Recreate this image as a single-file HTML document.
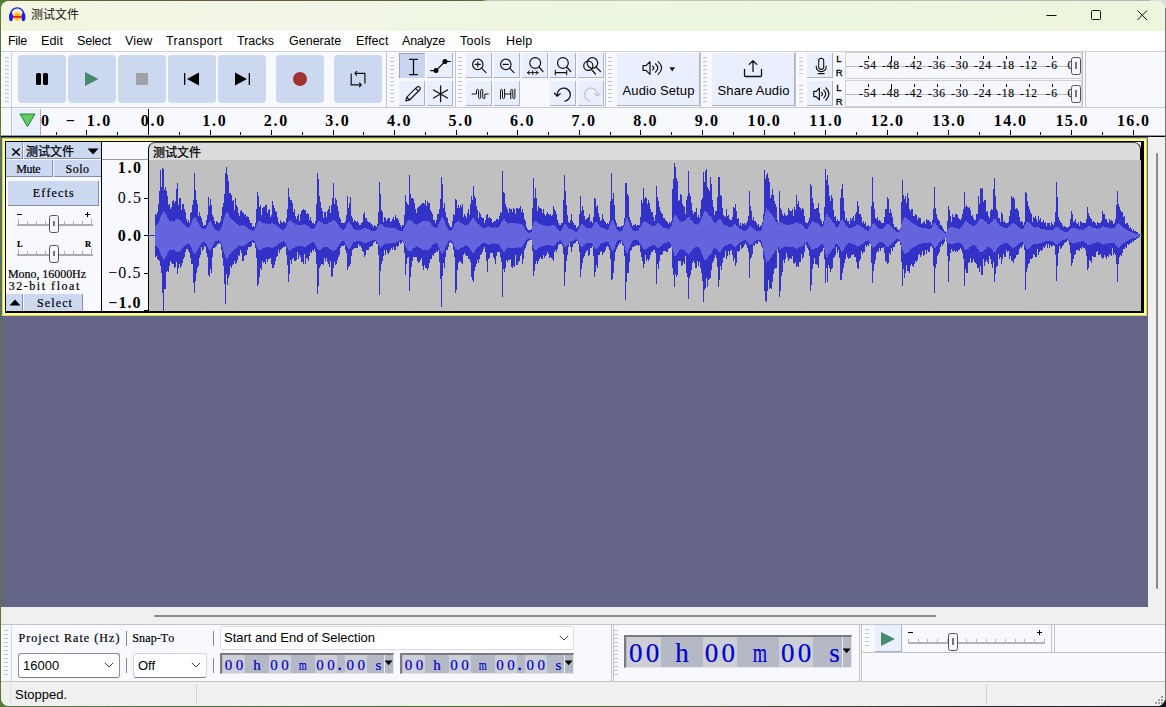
<!DOCTYPE html>
<html lang="zh"><head><meta charset="utf-8"><title>测试文件</title>
<style>
*{box-sizing:border-box;margin:0;padding:0}
html,body{width:1166px;height:707px;overflow:hidden;background:#4a6a30}
body{background:linear-gradient(90deg,#567a36 0%,#4a6a30 35%,#56583c 60%,#22242c 85%,#14161e 100%)}
body{position:relative;font-family:"Liberation Sans","Noto Sans CJK SC",sans-serif;font-size:13px;color:#000}
.abs{position:absolute}
.t{white-space:nowrap}
#win{position:absolute;left:1px;top:1px;width:1164px;height:705px;border-radius:8px;overflow:hidden;background:#f0f0f0}
#in{position:absolute;left:-1px;top:-1px;width:1166px;height:707px}
.sim{font-family:"Liberation Serif","Noto Serif CJK SC",serif;-webkit-text-stroke-width:0.2px}
.rl{font-family:"Liberation Serif","Noto Serif CJK SC",serif;font-size:16px;line-height:16px;font-weight:bold}
.tb{position:absolute;background:#ccd7f0;border-radius:4px}
.grab{position:absolute;width:4px;background:repeating-linear-gradient(to bottom,#c4c4c4 0,#c4c4c4 1px,transparent 1px,transparent 4px)}
</style></head><body>
<div class="abs" style="left:6px;top:0;width:1160px;height:1px;background:linear-gradient(90deg,#5a6a3a 0,#6a5a40 20%,#5a6a3a 41%,#c4c8bc 41.5%,#b4b8b0 100%)"></div><div class="abs" style="left:1150px;top:0;width:16px;height:12px;background:#dcdcdc"></div><div class="abs" style="left:1165px;top:8px;width:1px;height:692px;background:#70747c"></div>
<div id="win"><div id="in">
<div class="abs" style="left:0px;top:0px;width:1166px;height:31px;background:linear-gradient(90deg,#f1f5df 0%,#f3f6e5 15%,#f2f6e8 28%,#edf6df 46%,#edf6dd 100%);"></div>
<svg class="abs" style="left:8px;top:6px" width="18" height="16" viewBox="0 0 18 16">
<defs><radialGradient id="ig" cx="50%" cy="50%" r="55%"><stop offset="0" stop-color="#ff9a10"/><stop offset="0.6" stop-color="#ffc020"/><stop offset="1" stop-color="#fff08a"/></radialGradient></defs>
<ellipse cx="9.2" cy="10.4" rx="4.3" ry="4.6" fill="url(#ig)"/>
<rect x="5" y="10" width="8.4" height="1.7" fill="#f01818"/>
<path d="M2.7 10.5V8.4A6.5 6.5 0 0 1 15.7 8.4V10.5" fill="none" stroke="#1c1cff" stroke-width="1.4"/>
<ellipse cx="3" cy="11" rx="2" ry="4.2" fill="#1c1cff"/><ellipse cx="15.4" cy="11" rx="2" ry="4.2" fill="#1c1cff"/>
</svg>
<div class="abs t " style="left:31px;top:7px;font-size:12px;line-height:16px;color:#111">测试文件</div>
<svg class="abs" style="left:1040px;top:8px" width="120" height="16" viewBox="0 0 120 16" fill="none" stroke="#111" stroke-width="1">
<path d="M6.5 7.5H16.5"/><rect x="51.5" y="2.5" width="9" height="9" rx="1"/><path d="M97.5 2.5L107 12M107 2.5L97.5 12"/></svg>
<div class="abs" style="left:0px;top:31px;width:1166px;height:20px;background:#ffffff;"></div>
<div class="abs t " style="left:8px;top:33px;font-size:12.5px;line-height:16px;letter-spacing:-0.3px">File</div>
<div class="abs t " style="left:41px;top:33px;font-size:12.5px;line-height:16px;letter-spacing:0.15px">Edit</div>
<div class="abs t " style="left:77px;top:33px;font-size:12.5px;line-height:16px;letter-spacing:-0.15px">Select</div>
<div class="abs t " style="left:125px;top:33px;font-size:12.5px;line-height:16px;letter-spacing:0.15px">View</div>
<div class="abs t " style="left:166px;top:33px;font-size:12.5px;line-height:16px;letter-spacing:0.38px">Transport</div>
<div class="abs t " style="left:237px;top:33px;font-size:12.5px;line-height:16px;letter-spacing:0px">Tracks</div>
<div class="abs t " style="left:289px;top:33px;font-size:12.5px;line-height:16px;letter-spacing:0px">Generate</div>
<div class="abs t " style="left:356px;top:33px;font-size:12.5px;line-height:16px;letter-spacing:0.15px">Effect</div>
<div class="abs t " style="left:402px;top:33px;font-size:12.5px;line-height:16px;letter-spacing:-0.2px">Analyze</div>
<div class="abs t " style="left:460px;top:33px;font-size:12.5px;line-height:16px;letter-spacing:0.3px">Tools</div>
<div class="abs t " style="left:506px;top:33px;font-size:12.5px;line-height:16px;letter-spacing:0.18px">Help</div>
<div class="abs" style="left:0px;top:51px;width:1166px;height:57px;background:#f8f9fe;border-top:1px solid #d0d0d0"></div>
<div class="grab" style="left:5px;top:57px;height:46px"></div>
<div class="abs" style="left:11px;top:52px;width:1px;height:55px;background:#d4d4d8;"></div>
<div class="tb" style="left:18px;top:55px;width:48px;height:48px"></div>
<div class="tb" style="left:68px;top:55px;width:48px;height:48px"></div>
<div class="tb" style="left:118px;top:55px;width:48px;height:48px"></div>
<div class="tb" style="left:168px;top:55px;width:48px;height:48px"></div>
<div class="tb" style="left:218px;top:55px;width:48px;height:48px"></div>
<div class="tb" style="left:276px;top:55px;width:48px;height:48px"></div>
<div class="tb" style="left:334px;top:55px;width:48px;height:48px"></div>
<div class="abs" style="left:36px;top:72.6px;width:5.2px;height:12.2px;background:#000;border-radius:1.5px"></div>
<div class="abs" style="left:42.8px;top:72.6px;width:5.2px;height:12.2px;background:#000;border-radius:1.5px"></div>
<svg class="abs" style="left:84px;top:71px" width="16" height="16" viewBox="0 0 16 16"><path d="M1 1L14.5 8L1 15z" fill="#468c6c"/></svg>
<div class="abs" style="left:136px;top:73px;width:12px;height:12px;background:#a0a0a8;"></div>
<svg class="abs" style="left:184px;top:72px" width="16" height="14" viewBox="0 0 16 14"><rect x="0" y="1" width="1.3" height="12" fill="#000"/><path d="M15 0.5V13.5L3 7z" fill="#000"/></svg>
<svg class="abs" style="left:234px;top:72px" width="16" height="14" viewBox="0 0 16 14"><rect x="14.7" y="1" width="1.3" height="12" fill="#000"/><path d="M1 0.5V13.5L13 7z" fill="#000"/></svg>
<div class="abs" style="left:293px;top:72px;width:14px;height:14px;background:#a03232;border-radius:7px"></div>
<svg class="abs" style="left:350px;top:70px" width="16" height="18" viewBox="0 0 16 18" fill="none" stroke="#111" stroke-width="1.2"><path d="M1.2 3.4V14.8H11.2M11.4 14.8L9.2 12.6M11.4 14.8L9.2 17"/><path d="M14.9 13.6V3.4H5M4.8 3.4L7 1.2M4.8 3.4L7 5.6"/></svg>
<div class="abs" style="left:386px;top:52px;width:1px;height:55px;background:#c4c4c8;"></div>
<div class="grab" style="left:390px;top:57px;height:46px"></div>
<div class="abs" style="left:399px;top:53px;width:26px;height:25px;background:#c9d5ef;border-top:1px solid #98a4c0;border-left:1px solid #98a4c0"></div>
<div class="abs" style="left:427px;top:53px;width:26px;height:25px;background:#e9effc;border-bottom:1px solid #a8b2cc;border-right:1px solid #a8b2cc"></div>
<div class="abs" style="left:399px;top:81px;width:26px;height:25px;background:#e9effc;border-bottom:1px solid #a8b2cc;border-right:1px solid #a8b2cc"></div>
<div class="abs" style="left:427px;top:81px;width:26px;height:25px;background:#e9effc;border-bottom:1px solid #a8b2cc;border-right:1px solid #a8b2cc"></div>
<svg class="abs" style="left:399px;top:52px" width="26" height="26" viewBox="0 0 26 26" fill="none" stroke="#111" stroke-width="1.2" stroke-linecap="round" ><path d="M10.6 7.4H18.4M10.6 22.6H18.4M14.5 7.4V22.6" stroke-width="1.3"/></svg>
<svg class="abs" style="left:427px;top:52px" width="27" height="26" viewBox="0 0 27 26" fill="none" stroke="#111" stroke-width="1.2" stroke-linecap="round" ><path d="M3.5 18.6H9M9 18.6L18 9.5M18 9.5H23.5" stroke-width="1.2"/><circle cx="9" cy="18.6" r="2.5" fill="#000" stroke="none"/><circle cx="18" cy="9.5" r="2.5" fill="#000" stroke="none"/></svg>
<svg class="abs" style="left:399px;top:81px" width="26" height="26" viewBox="0 0 26 26" fill="none" stroke="#111" stroke-width="1.2" stroke-linecap="round" ><path d="M6.8 19.9L7.8 16.2L17.8 6.2A1.9 1.9 0 0 1 20.6 9L10.6 19L6.8 19.9zM7.8 16.2L10.6 19M16.6 7.4L19.4 10.2" stroke-width="1.1" stroke-linejoin="round"/></svg>
<svg class="abs" style="left:427px;top:81px" width="27" height="26" viewBox="0 0 27 26" fill="none" stroke="#111" stroke-width="1.2" stroke-linecap="round" ><path d="M13.6 5V20.7M6.5 9L20.5 17M20.5 9L6.5 17" stroke-width="1.3"/></svg>
<div class="abs" style="left:455px;top:52px;width:1px;height:55px;background:#c4c4c8;"></div>
<div class="grab" style="left:458px;top:57px;height:46px"></div>
<div class="abs" style="left:466px;top:53px;width:26px;height:25px;background:#e9effc;border-bottom:1px solid #a8b2cc;border-right:1px solid #a8b2cc"></div>
<div class="abs" style="left:494px;top:53px;width:26px;height:25px;background:#e9effc;border-bottom:1px solid #a8b2cc;border-right:1px solid #a8b2cc"></div>
<div class="abs" style="left:522px;top:53px;width:26px;height:25px;background:#e9effc;border-bottom:1px solid #a8b2cc;border-right:1px solid #a8b2cc"></div>
<div class="abs" style="left:550px;top:53px;width:26px;height:25px;background:#e9effc;border-bottom:1px solid #a8b2cc;border-right:1px solid #a8b2cc"></div>
<div class="abs" style="left:578px;top:53px;width:26px;height:25px;background:#e9effc;border-bottom:1px solid #a8b2cc;border-right:1px solid #a8b2cc"></div>
<div class="abs" style="left:466px;top:81px;width:26px;height:25px;background:#e9effc;border-bottom:1px solid #a8b2cc;border-right:1px solid #a8b2cc"></div>
<div class="abs" style="left:494px;top:81px;width:26px;height:25px;background:#e9effc;border-bottom:1px solid #a8b2cc;border-right:1px solid #a8b2cc"></div>
<div class="abs" style="left:550px;top:81px;width:26px;height:25px;background:#e9effc;border-bottom:1px solid #a8b2cc;border-right:1px solid #a8b2cc"></div>
<div class="abs" style="left:578px;top:81px;width:26px;height:25px;background:#e9effc;border-bottom:1px solid #a8b2cc;border-right:1px solid #a8b2cc"></div>
<svg class="abs" style="left:466px;top:52px" width="26" height="26" viewBox="0 0 26 26" fill="none" stroke="#111" stroke-width="1.2" stroke-linecap="round" ><circle cx="11.8" cy="12.4" r="5.2"/><path d="M15.6 16.2L20 20.6"/><path d="M9.3 12.4H14.3M11.8 9.9V14.9" stroke-width="1.1"/></svg>
<svg class="abs" style="left:494px;top:52px" width="26" height="26" viewBox="0 0 26 26" fill="none" stroke="#111" stroke-width="1.2" stroke-linecap="round" ><circle cx="11.8" cy="12.4" r="5.2"/><path d="M15.6 16.2L20 20.6"/><path d="M9.3 12.4H14.3" stroke-width="1.1"/></svg>
<svg class="abs" style="left:522px;top:52px" width="26" height="26" viewBox="0 0 26 26" fill="none" stroke="#111" stroke-width="1.2" stroke-linecap="round" ><circle cx="13.2" cy="11" r="5.4"/><path d="M17 15L21 19.5"/><path d="M5.5 20.6H16M5.5 20.6L7.5 18.8M5.5 20.6L7.5 22.4M16 20.6L14 18.8M16 20.6L14 22.4M10.7 18.8V22.4" stroke-width="1"/></svg>
<svg class="abs" style="left:550px;top:52px" width="26" height="26" viewBox="0 0 26 26" fill="none" stroke="#111" stroke-width="1.2" stroke-linecap="round" ><circle cx="12.9" cy="11" r="5.4"/><path d="M16.7 15L20.7 19.5"/><path d="M5.3 20.6H16.7M5.3 18.4V22.8M16.7 18.4V22.8" stroke-width="1.1"/></svg>
<svg class="abs" style="left:578px;top:52px" width="26" height="26" viewBox="0 0 26 26" fill="none" stroke="#111" stroke-width="1.2" stroke-linecap="round" ><circle cx="10.3" cy="13.8" r="4.6"/><circle cx="14.4" cy="11" r="5.3"/><path d="M18 15L22.5 19.5M13.5 17.5L17.5 22"/></svg>
<svg class="abs" style="left:466px;top:81px" width="26" height="26" viewBox="0 0 26 26" fill="none" stroke="#111" stroke-width="1.2" stroke-linecap="round" ><path d="M6 13H10.5V9.6Q10.5 8.4 11.55 8.4Q12.6 8.4 12.6 9.6V16.4Q12.6 17.6 13.65 17.6Q14.7 17.6 14.7 16.4V9.6Q14.7 8.4 15.75 8.4Q16.8 8.4 16.8 9.6V16.4Q16.8 17.6 17.85 17.6Q18.9 17.6 18.9 16.4V13H22.2" stroke-width="1" stroke-linejoin="round"/></svg>
<svg class="abs" style="left:494px;top:81px" width="26" height="26" viewBox="0 0 26 26" fill="none" stroke="#111" stroke-width="1.2" stroke-linecap="round" ><path d="M6.5 17.8V9.6Q6.5 8.4 7.5 8.4Q8.5 8.4 8.5 9.6V16.4Q8.5 17.6 9.55 17.6Q10.6 17.6 10.6 16.4V8.2M10.6 13H16.8M16.8 17.8V9.6Q16.8 8.4 17.8 8.4Q18.8 8.4 18.8 9.6V16.4Q18.8 17.6 19.85 17.6Q20.9 17.6 20.9 16.4V8.2" stroke-width="1" stroke-linejoin="round"/></svg>
<svg class="abs" style="left:550px;top:81px" width="26" height="26" viewBox="0 0 26 26" fill="none" stroke="#111" stroke-width="1.2" stroke-linecap="round" ><path d="M7.2 14.6A6.6 6.6 0 1 1 15 20.2" stroke-width="1.3"/><path d="M4.6 12.2L7.2 15.2L10.2 12.8" stroke-width="1.3"/></svg>
<svg class="abs" style="left:578px;top:81px" width="26" height="26" viewBox="0 0 26 26" fill="none" stroke="#c4c8d4" stroke-width="1.2" stroke-linecap="round" style="stroke:#c4c8d4"><path d="M19.6 14.6A6.6 6.6 0 1 0 11.8 20.2" stroke-width="1.3"/><path d="M22.2 12.2L19.6 15.2L16.6 12.8" stroke-width="1.3"/></svg>
<div class="abs" style="left:605px;top:52px;width:1px;height:55px;background:#c4c4c8;"></div>
<div class="grab" style="left:608px;top:57px;height:46px"></div>
<div class="abs" style="left:617px;top:53px;width:83px;height:53px;background:#e9effc;border-bottom:1px solid #a8b2cc;border-right:1px solid #a8b2cc"></div>
<svg class="abs" style="left:642px;top:60px" width="22" height="16" viewBox="0 0 22 16" fill="none" stroke="#111" stroke-width="1.2" stroke-linecap="round" ><path d="M1 5.6H4L8 1.6V14.4L4 10.4H1z" stroke-linejoin="round"/><path d="M10.6 6.2Q13.2 8 10.6 9.8M13.4 3.8Q18.2 8 13.4 12.2M16.2 1.6Q23 8 16.2 14.4"/></svg>
<svg class="abs" style="left:669px;top:67px" width="7" height="5" viewBox="0 0 7 5"><path d="M0.4 0.3H6L3.2 4.4z" fill="#111"/></svg>
<div class="abs t " style="left:617px;top:83px;width:83px;text-align:center;font-size:13px;line-height:16px;letter-spacing:0.1px">Audio Setup</div>
<div class="abs" style="left:700px;top:52px;width:1px;height:55px;background:#c4c4c8;"></div>
<div class="grab" style="left:703px;top:57px;height:46px"></div>
<div class="abs" style="left:712px;top:53px;width:83px;height:53px;background:#e9effc;border-bottom:1px solid #a8b2cc;border-right:1px solid #a8b2cc"></div>
<svg class="abs" style="left:743px;top:59px" width="20" height="19" viewBox="0 0 20 19" fill="none" stroke="#111" stroke-width="1.2" stroke-linecap="round" ><path d="M1.5 10.5V16.5Q1.5 17.5 2.5 17.5H17.5Q18.5 17.5 18.5 16.5V10.5M10 12.5V1.6M10 1.6L6.2 5.4M10 1.6L13.8 5.4" stroke-width="1.3"/></svg>
<div class="abs t " style="left:712px;top:83px;width:83px;text-align:center;font-size:13px;line-height:16px;letter-spacing:0.1px">Share Audio</div>
<div class="abs" style="left:795px;top:52px;width:1px;height:55px;background:#c4c4c8;"></div>
<div class="grab" style="left:799px;top:57px;height:19px"></div>
<div class="abs" style="left:807px;top:53px;width:26px;height:25px;background:#e9effc;border-bottom:1px solid #a8b2cc;border-right:1px solid #a8b2cc"></div>
<div class="abs t " style="left:836.3px;top:54px;font-size:9.5px;line-height:10px;-webkit-text-stroke-width:0.3px">L</div>
<div class="abs t " style="left:835.8px;top:68px;font-size:9.5px;line-height:10px;-webkit-text-stroke-width:0.3px">R</div>
<div class="abs" style="left:845px;top:52px;width:237px;height:27px;background:#f7f8fd;border:1px solid #d0d0d4"></div>
<div class="abs" style="left:846px;top:66px;width:230px;height:1px;background:#b8b8bc;"></div>
<div class="abs" style="left:868px;top:56px;width:1px;height:3px;background:#000;"></div>
<div class="abs t sim" style="left:858.95px;top:59px;font-kerning:none;letter-spacing:0.89px;font-size:11.5px;line-height:13px;-webkit-text-stroke-width:0.15px">-54</div>
<div class="abs" style="left:891px;top:56px;width:1px;height:6px;background:#000;"></div>
<div class="abs t sim" style="left:881.95px;top:59px;font-kerning:none;letter-spacing:0.89px;font-size:11.5px;line-height:13px;-webkit-text-stroke-width:0.15px">-48</div>
<div class="abs" style="left:914px;top:56px;width:1px;height:3px;background:#000;"></div>
<div class="abs t sim" style="left:904.95px;top:59px;font-kerning:none;letter-spacing:0.89px;font-size:11.5px;line-height:13px;-webkit-text-stroke-width:0.15px">-42</div>
<div class="abs" style="left:937px;top:56px;width:1px;height:3px;background:#000;"></div>
<div class="abs t sim" style="left:927.95px;top:59px;font-kerning:none;letter-spacing:0.89px;font-size:11.5px;line-height:13px;-webkit-text-stroke-width:0.15px">-36</div>
<div class="abs" style="left:960px;top:56px;width:1px;height:3px;background:#000;"></div>
<div class="abs t sim" style="left:950.95px;top:59px;font-kerning:none;letter-spacing:0.89px;font-size:11.5px;line-height:13px;-webkit-text-stroke-width:0.15px">-30</div>
<div class="abs" style="left:983px;top:56px;width:1px;height:3px;background:#000;"></div>
<div class="abs t sim" style="left:973.95px;top:59px;font-kerning:none;letter-spacing:0.89px;font-size:11.5px;line-height:13px;-webkit-text-stroke-width:0.15px">-24</div>
<div class="abs" style="left:1006px;top:56px;width:1px;height:3px;background:#000;"></div>
<div class="abs t sim" style="left:996.95px;top:59px;font-kerning:none;letter-spacing:0.89px;font-size:11.5px;line-height:13px;-webkit-text-stroke-width:0.15px">-18</div>
<div class="abs" style="left:1029px;top:56px;width:1px;height:3px;background:#000;"></div>
<div class="abs t sim" style="left:1019.95px;top:59px;font-kerning:none;letter-spacing:0.89px;font-size:11.5px;line-height:13px;-webkit-text-stroke-width:0.15px">-12</div>
<div class="abs" style="left:1052px;top:56px;width:1px;height:3px;background:#000;"></div>
<div class="abs t sim" style="left:1046.11px;top:59px;font-kerning:none;letter-spacing:1.21px;font-size:11.5px;line-height:13px;-webkit-text-stroke-width:0.15px">-6</div>
<div class="abs t sim" style="left:1067.5px;top:59px;font-size:11.5px;line-height:13px">0</div>
<div class="abs" style="left:1071px;top:57px;width:10px;height:18px;background:#f4f6fc;border:1px solid #555;border-radius:2.5px"></div>
<div class="abs" style="left:1075px;top:62px;width:2px;height:7px;background:#777;"></div>
<div class="grab" style="left:799px;top:85px;height:19px"></div>
<div class="abs" style="left:807px;top:81px;width:26px;height:25px;background:#e9effc;border-bottom:1px solid #a8b2cc;border-right:1px solid #a8b2cc"></div>
<div class="abs t " style="left:836.3px;top:83px;font-size:9.5px;line-height:10px;-webkit-text-stroke-width:0.3px">L</div>
<div class="abs t " style="left:835.8px;top:97px;font-size:9.5px;line-height:10px;-webkit-text-stroke-width:0.3px">R</div>
<div class="abs" style="left:845px;top:80px;width:237px;height:27px;background:#f7f8fd;border:1px solid #d0d0d4"></div>
<div class="abs" style="left:846px;top:94px;width:230px;height:1px;background:#b8b8bc;"></div>
<div class="abs" style="left:868px;top:84px;width:1px;height:3px;background:#000;"></div>
<div class="abs t sim" style="left:858.95px;top:87px;font-kerning:none;letter-spacing:0.89px;font-size:11.5px;line-height:13px;-webkit-text-stroke-width:0.15px">-54</div>
<div class="abs" style="left:891px;top:84px;width:1px;height:6px;background:#000;"></div>
<div class="abs t sim" style="left:881.95px;top:87px;font-kerning:none;letter-spacing:0.89px;font-size:11.5px;line-height:13px;-webkit-text-stroke-width:0.15px">-48</div>
<div class="abs" style="left:914px;top:84px;width:1px;height:3px;background:#000;"></div>
<div class="abs t sim" style="left:904.95px;top:87px;font-kerning:none;letter-spacing:0.89px;font-size:11.5px;line-height:13px;-webkit-text-stroke-width:0.15px">-42</div>
<div class="abs" style="left:937px;top:84px;width:1px;height:3px;background:#000;"></div>
<div class="abs t sim" style="left:927.95px;top:87px;font-kerning:none;letter-spacing:0.89px;font-size:11.5px;line-height:13px;-webkit-text-stroke-width:0.15px">-36</div>
<div class="abs" style="left:960px;top:84px;width:1px;height:3px;background:#000;"></div>
<div class="abs t sim" style="left:950.95px;top:87px;font-kerning:none;letter-spacing:0.89px;font-size:11.5px;line-height:13px;-webkit-text-stroke-width:0.15px">-30</div>
<div class="abs" style="left:983px;top:84px;width:1px;height:3px;background:#000;"></div>
<div class="abs t sim" style="left:973.95px;top:87px;font-kerning:none;letter-spacing:0.89px;font-size:11.5px;line-height:13px;-webkit-text-stroke-width:0.15px">-24</div>
<div class="abs" style="left:1006px;top:84px;width:1px;height:3px;background:#000;"></div>
<div class="abs t sim" style="left:996.95px;top:87px;font-kerning:none;letter-spacing:0.89px;font-size:11.5px;line-height:13px;-webkit-text-stroke-width:0.15px">-18</div>
<div class="abs" style="left:1029px;top:84px;width:1px;height:3px;background:#000;"></div>
<div class="abs t sim" style="left:1019.95px;top:87px;font-kerning:none;letter-spacing:0.89px;font-size:11.5px;line-height:13px;-webkit-text-stroke-width:0.15px">-12</div>
<div class="abs" style="left:1052px;top:84px;width:1px;height:3px;background:#000;"></div>
<div class="abs t sim" style="left:1046.11px;top:87px;font-kerning:none;letter-spacing:1.21px;font-size:11.5px;line-height:13px;-webkit-text-stroke-width:0.15px">-6</div>
<div class="abs t sim" style="left:1067.5px;top:87px;font-size:11.5px;line-height:13px">0</div>
<div class="abs" style="left:1071px;top:85px;width:10px;height:18px;background:#f4f6fc;border:1px solid #555;border-radius:2.5px"></div>
<div class="abs" style="left:1075px;top:90px;width:2px;height:7px;background:#777;"></div>
<svg class="abs" style="left:807px;top:52px" width="26" height="26" viewBox="0 0 26 26" fill="none" stroke="#111" stroke-width="1.2" stroke-linecap="round" ><rect x="11.7" y="6.2" width="5" height="11.2" rx="2.5" stroke-width="1.1"/><path d="M9.2 14Q9.2 19.6 14.2 19.6Q19.2 19.6 19.2 14M11.2 21.6H17.2" stroke-width="1.1"/></svg>
<svg class="abs" style="left:812.5px;top:87px" width="18" height="14" viewBox="0 0 18 14" fill="none" stroke="#111" stroke-width="1.2" stroke-linecap="round" ><path d="M0.8 4.4H3.2L6.4 1.2V12.8L3.2 9.6H0.8z" stroke-linejoin="round"/><path d="M8.6 5.4Q10.4 7 8.6 8.6M10.8 3.2Q14.6 7 10.8 10.8M13 1Q18.8 7 13 13"/></svg>
<div class="abs" style="left:1082px;top:52px;width:1px;height:55px;background:#c4c4c8;"></div>
<div class="abs" style="left:1085px;top:52px;width:1px;height:55px;background:#c4c4c8;"></div>
<div class="abs" style="left:0px;top:107px;width:1166px;height:1px;background:#c8c8c8;"></div>
<div class="abs" style="left:0px;top:108px;width:1166px;height:27px;background:#f8f9fe;"></div>
<div class="abs" style="left:11px;top:108px;width:1px;height:27px;background:#c0c0c4;"></div>
<div class="abs" style="left:13px;top:109px;width:27px;height:26px;background:#eaf0fc;"></div>
<div class="abs" style="left:40px;top:109px;width:1px;height:26px;background:#a8b0c8;"></div>
<svg class="abs" style="left:19px;top:113px" width="17" height="15" viewBox="0 0 17 15"><path d="M1 1H16L8.5 13.6z" fill="#5ccf5c" stroke="#2c7a3c" stroke-width="1"/></svg>
<div class="abs" style="left:56px;top:132px;width:1px;height:3px;background:#000;"></div>
<div class="abs" style="left:86px;top:130px;width:1px;height:5px;background:#000;"></div>
<div class="abs" style="left:117px;top:132px;width:1px;height:3px;background:#000;"></div>
<div class="abs" style="left:148px;top:130px;width:1px;height:5px;background:#000;"></div>
<div class="abs" style="left:179px;top:132px;width:1px;height:3px;background:#000;"></div>
<div class="abs" style="left:210px;top:130px;width:1px;height:5px;background:#000;"></div>
<div class="abs" style="left:240px;top:132px;width:1px;height:3px;background:#000;"></div>
<div class="abs" style="left:271px;top:130px;width:1px;height:5px;background:#000;"></div>
<div class="abs" style="left:302px;top:132px;width:1px;height:3px;background:#000;"></div>
<div class="abs" style="left:333px;top:130px;width:1px;height:5px;background:#000;"></div>
<div class="abs" style="left:363px;top:132px;width:1px;height:3px;background:#000;"></div>
<div class="abs" style="left:394px;top:130px;width:1px;height:5px;background:#000;"></div>
<div class="abs" style="left:425px;top:132px;width:1px;height:3px;background:#000;"></div>
<div class="abs" style="left:456px;top:130px;width:1px;height:5px;background:#000;"></div>
<div class="abs" style="left:487px;top:132px;width:1px;height:3px;background:#000;"></div>
<div class="abs" style="left:517px;top:130px;width:1px;height:5px;background:#000;"></div>
<div class="abs" style="left:548px;top:132px;width:1px;height:3px;background:#000;"></div>
<div class="abs" style="left:579px;top:130px;width:1px;height:5px;background:#000;"></div>
<div class="abs" style="left:610px;top:132px;width:1px;height:3px;background:#000;"></div>
<div class="abs" style="left:640px;top:130px;width:1px;height:5px;background:#000;"></div>
<div class="abs" style="left:671px;top:132px;width:1px;height:3px;background:#000;"></div>
<div class="abs" style="left:702px;top:130px;width:1px;height:5px;background:#000;"></div>
<div class="abs" style="left:733px;top:132px;width:1px;height:3px;background:#000;"></div>
<div class="abs" style="left:764px;top:130px;width:1px;height:5px;background:#000;"></div>
<div class="abs" style="left:794px;top:132px;width:1px;height:3px;background:#000;"></div>
<div class="abs" style="left:825px;top:130px;width:1px;height:5px;background:#000;"></div>
<div class="abs" style="left:856px;top:132px;width:1px;height:3px;background:#000;"></div>
<div class="abs" style="left:887px;top:130px;width:1px;height:5px;background:#000;"></div>
<div class="abs" style="left:917px;top:132px;width:1px;height:3px;background:#000;"></div>
<div class="abs" style="left:948px;top:130px;width:1px;height:5px;background:#000;"></div>
<div class="abs" style="left:979px;top:132px;width:1px;height:3px;background:#000;"></div>
<div class="abs" style="left:1010px;top:130px;width:1px;height:5px;background:#000;"></div>
<div class="abs" style="left:1040px;top:132px;width:1px;height:3px;background:#000;"></div>
<div class="abs" style="left:1071px;top:130px;width:1px;height:5px;background:#000;"></div>
<div class="abs" style="left:1102px;top:132px;width:1px;height:3px;background:#000;"></div>
<div class="abs" style="left:1133px;top:130px;width:1px;height:5px;background:#000;"></div>
<div class="abs t rl" style="left:40.94px;top:113px;font-kerning:none;letter-spacing:0.4px;">0</div>
<div class="abs t rl" style="left:65.79px;top:113px;font-kerning:none;letter-spacing:-0.717px;">−</div>
<div class="abs t rl" style="left:86.77px;top:113px;font-kerning:none;letter-spacing:1.733px;">1.0</div>
<div class="abs t rl" style="left:140.77px;top:113px;font-kerning:none;letter-spacing:1.733px;">0.0</div>
<div class="abs t rl" style="left:202.27px;top:113px;font-kerning:none;letter-spacing:1.733px;">1.0</div>
<div class="abs t rl" style="left:263.87px;top:113px;font-kerning:none;letter-spacing:1.733px;">2.0</div>
<div class="abs t rl" style="left:325.37px;top:113px;font-kerning:none;letter-spacing:1.733px;">3.0</div>
<div class="abs t rl" style="left:386.97px;top:113px;font-kerning:none;letter-spacing:1.733px;">4.0</div>
<div class="abs t rl" style="left:448.57px;top:113px;font-kerning:none;letter-spacing:1.733px;">5.0</div>
<div class="abs t rl" style="left:510.07px;top:113px;font-kerning:none;letter-spacing:1.733px;">6.0</div>
<div class="abs t rl" style="left:571.57px;top:113px;font-kerning:none;letter-spacing:1.733px;">7.0</div>
<div class="abs t rl" style="left:633.17px;top:113px;font-kerning:none;letter-spacing:1.733px;">8.0</div>
<div class="abs t rl" style="left:694.67px;top:113px;font-kerning:none;letter-spacing:1.733px;">9.0</div>
<div class="abs t rl" style="left:747.59px;top:113px;font-kerning:none;letter-spacing:1.4px;">10.0</div>
<div class="abs t rl" style="left:809.19px;top:113px;font-kerning:none;letter-spacing:1.4px;">11.0</div>
<div class="abs t rl" style="left:870.69px;top:113px;font-kerning:none;letter-spacing:1.4px;">12.0</div>
<div class="abs t rl" style="left:932.19px;top:113px;font-kerning:none;letter-spacing:1.4px;">13.0</div>
<div class="abs t rl" style="left:993.79px;top:113px;font-kerning:none;letter-spacing:1.4px;">14.0</div>
<div class="abs t rl" style="left:1055.39px;top:113px;font-kerning:none;letter-spacing:1.4px;">15.0</div>
<div class="abs t rl" style="left:1116.89px;top:113px;font-kerning:none;letter-spacing:1.4px;">16.0</div>
<div class="abs" style="left:148px;top:109px;width:1px;height:27px;background:#000;"></div>
<div class="abs" style="left:0px;top:135px;width:1166px;height:1px;background:#9a9aa0;"></div>
<div class="abs" style="left:0px;top:136px;width:1166px;height:1px;background:#000;"></div>
<div class="abs" style="left:0px;top:137px;width:1148px;height:470px;background:#646586;"></div>
<div class="abs" style="left:2px;top:138px;width:1145px;height:178px;background:#ffff80;border:1px solid #d2d284"></div>
<div class="abs" style="left:5px;top:141px;width:1139px;height:172px;background:#000;"></div>
<div class="abs" style="left:6px;top:142px;width:95px;height:169px;background:#f8f9fe;"></div>
<div class="abs" style="left:6px;top:142px;width:17px;height:17px;background:#ccd7f0;border-right:1px solid #8890a8;border-bottom:1px solid #8890a8"></div>
<svg class="abs" style="left:10.5px;top:146.5px" width="10" height="10" viewBox="0 0 10 10"><path d="M1.3 1.5L8.7 8.5M8.7 1.5L1.3 8.5" stroke="#000" stroke-width="1.6"/></svg>
<div class="abs" style="left:24px;top:142px;width:77px;height:17px;background:#ccd7f0;border-bottom:1px solid #8890a8"></div>
<div class="abs t " style="left:26px;top:145px;font-size:12px;line-height:14px;color:#000;-webkit-text-stroke:0.25px #000;font-family:"Liberation Sans","Noto Sans CJK SC",sans-serif;letter-spacing:0.3px">测试文件</div>
<svg class="abs" style="left:87px;top:148px" width="12" height="7" viewBox="0 0 12 7"><path d="M0.5 0.5H11.5L6 6.5z" fill="#000"/></svg>
<div class="abs" style="left:6px;top:160px;width:47px;height:17px;background:#ccd7f0;border-right:1px solid #8890a8;border-bottom:1px solid #8890a8"></div>
<div class="abs" style="left:54px;top:160px;width:47px;height:17px;background:#ccd7f0;border-bottom:1px solid #8890a8"></div>
<div class="abs t sim" style="left:16.13px;top:162px;font-kerning:none;letter-spacing:-0.332px;font-size:12px;line-height:14px">Mute</div>
<div class="abs t sim" style="left:65.55px;top:162px;font-kerning:none;letter-spacing:0.498px;font-size:12px;line-height:14px">Solo</div>
<div class="abs" style="left:8px;top:181px;width:91px;height:25px;background:#ccd7f0;border-right:1px solid #8890a8;border-bottom:1px solid #8890a8"></div>
<div class="abs t sim" style="left:32.77px;top:186px;font-kerning:none;letter-spacing:1.146px;font-size:12px;line-height:14px">Effects</div>
<div class="abs" style="left:17px;top:224px;width:76px;height:2px;background:#acacac;"></div>
<div class="abs" style="left:18px;top:219px;width:1px;height:5px;background:#b0b0b0;"></div>
<div class="abs" style="left:27px;top:221px;width:1px;height:3px;background:#b0b0b0;"></div>
<div class="abs" style="left:36px;top:221px;width:1px;height:3px;background:#b0b0b0;"></div>
<div class="abs" style="left:45px;top:221px;width:1px;height:3px;background:#b0b0b0;"></div>
<div class="abs" style="left:55px;top:221px;width:1px;height:3px;background:#b0b0b0;"></div>
<div class="abs" style="left:64px;top:221px;width:1px;height:3px;background:#b0b0b0;"></div>
<div class="abs" style="left:73px;top:221px;width:1px;height:3px;background:#b0b0b0;"></div>
<div class="abs" style="left:82px;top:221px;width:1px;height:3px;background:#b0b0b0;"></div>
<div class="abs" style="left:91px;top:219px;width:1px;height:5px;background:#b0b0b0;"></div>
<div class="abs" style="left:49px;top:215px;width:10px;height:18px;background:#f4f6fc;border:1px solid #555;border-radius:2.5px"></div>
<div class="abs" style="left:53.2px;top:220.5px;width:1.6px;height:5.5px;background:#777;"></div>
<div class="abs" style="left:17px;top:214px;width:5px;height:1.4px;background:#000;"></div>
<div class="abs" style="left:85px;top:214px;width:5px;height:1.4px;background:#000;"></div>
<div class="abs" style="left:86.8px;top:212.2px;width:1.4px;height:5px;background:#000;"></div>
<div class="abs" style="left:17px;top:254px;width:76px;height:2px;background:#acacac;"></div>
<div class="abs" style="left:18px;top:249px;width:1px;height:5px;background:#b0b0b0;"></div>
<div class="abs" style="left:27px;top:251px;width:1px;height:3px;background:#b0b0b0;"></div>
<div class="abs" style="left:36px;top:251px;width:1px;height:3px;background:#b0b0b0;"></div>
<div class="abs" style="left:45px;top:251px;width:1px;height:3px;background:#b0b0b0;"></div>
<div class="abs" style="left:55px;top:251px;width:1px;height:3px;background:#b0b0b0;"></div>
<div class="abs" style="left:64px;top:251px;width:1px;height:3px;background:#b0b0b0;"></div>
<div class="abs" style="left:73px;top:251px;width:1px;height:3px;background:#b0b0b0;"></div>
<div class="abs" style="left:82px;top:251px;width:1px;height:3px;background:#b0b0b0;"></div>
<div class="abs" style="left:91px;top:249px;width:1px;height:5px;background:#b0b0b0;"></div>
<div class="abs" style="left:49px;top:245px;width:10px;height:18px;background:#f4f6fc;border:1px solid #555;border-radius:2.5px"></div>
<div class="abs" style="left:53.2px;top:250.5px;width:1.6px;height:5.5px;background:#777;"></div>
<div class="abs t sim" style="left:17px;top:238.5px;font-size:8.5px;line-height:10px;font-weight:bold">L</div>
<div class="abs t sim" style="left:85px;top:238.5px;font-size:8.5px;line-height:10px;font-weight:bold">R</div>
<div class="abs t sim" style="left:7.97px;top:268px;font-kerning:none;letter-spacing:-0.051px;font-size:12px;line-height:12px">Mono, 16000Hz</div>
<div class="abs t sim" style="left:8.76px;top:280px;font-kerning:none;letter-spacing:1.529px;font-size:12px;line-height:12px">32-bit float</div>
<div class="abs" style="left:6px;top:294px;width:17px;height:17px;background:#ccd7f0;border-right:1px solid #8890a8"></div>
<svg class="abs" style="left:9px;top:299px" width="12" height="7" viewBox="0 0 12 7"><path d="M0.5 6.5H11.5L6 0.5z" fill="#000"/></svg>
<div class="abs" style="left:24px;top:294px;width:59px;height:17px;background:#ccd7f0;border-right:1px solid #8890a8"></div>
<div class="abs t sim" style="left:37.06px;top:296px;font-kerning:none;letter-spacing:1.113px;font-size:12px;line-height:14px">Select</div>
<div class="abs" style="left:102px;top:142px;width:46px;height:169px;background:#f8f9fe;"></div>
<div class="abs" style="left:102px;top:159px;width:46px;height:1px;background:#9a9aa0;"></div>
<div class="abs t rl" style="left:117.67px;top:160px;font-kerning:none;letter-spacing:1.733px;">1.0</div>
<div class="abs t rl" style="left:117.67px;top:190px;font-kerning:none;letter-spacing:1.733px;font-weight:normal;">0.5</div>
<div class="abs t rl" style="left:117.67px;top:228px;font-kerning:none;letter-spacing:1.733px;">0.0</div>
<div class="abs t rl" style="left:108.17px;top:265px;font-kerning:none;letter-spacing:1.144px;font-weight:normal;">−0.5</div>
<div class="abs t rl" style="left:108.15px;top:295px;font-kerning:none;letter-spacing:1.121px;">−1.0</div>
<div class="abs" style="left:144px;top:198px;width:4px;height:1px;background:#000;"></div>
<div class="abs" style="left:144px;top:235px;width:4px;height:1px;background:#000;"></div>
<div class="abs" style="left:144px;top:273px;width:4px;height:1px;background:#000;"></div>
<div class="abs" style="left:144px;top:310px;width:4px;height:1px;background:#000;"></div>
<div class="abs" style="left:149px;top:142px;width:992px;height:169px;background:#c0c0c0;"></div>
<div class="abs" style="left:148px;top:142px;width:6px;height:6px;background:#f8f9fe;"></div>
<div class="abs" style="left:1136px;top:142px;width:5px;height:5px;background:#f8f9fe;"></div>
<div class="abs" style="left:148px;top:142px;width:993px;height:24px;background:#dcdcdc;border-radius:7px 7px 0 0;border:1px solid #000;border-top-color:#505050;border-bottom:none"></div>
<div class="abs" style="left:149px;top:160px;width:992px;height:8px;background:#c0c0c0;"></div>
<div class="abs" style="left:148px;top:160px;width:1px;height:151px;background:#000;"></div>
<div class="abs t " style="left:153px;top:146px;font-size:12px;line-height:15px;color:#000;-webkit-text-stroke:0.25px #000;font-family:"Liberation Sans","Noto Sans CJK SC",sans-serif">测试文件</div>
<svg class="abs" style="left:0;top:0" width="1166" height="707" viewBox="0 0 1166 707" shape-rendering="crispEdges">
<rect x="149" y="235" width="7" height="1" fill="#3232c8"/>
<polygon fill="#3232c8" points="155,213.8 156,213.8 156,214.8 157,214.8 157,211.6 158,211.6 158,203.8 159,203.8 159,191.2 160,191.2 160,169.7 161,169.7 161,187.2 162,187.2 162,168.0 163,168.0 163,168.6 164,168.6 164,190.2 165,190.2 165,186.7 166,186.7 166,191.1 167,191.1 167,195.5 168,195.5 168,204.7 169,204.7 169,203.8 170,203.8 170,208.6 171,208.6 171,206.7 172,206.7 172,200.9 173,200.9 173,200.2 174,200.2 174,202.7 175,202.7 175,201.0 176,201.0 176,189.0 177,189.0 177,183.3 178,183.3 178,204.5 179,204.5 179,198.4 180,198.4 180,198.0 181,198.0 181,210.2 182,210.2 182,203.8 183,203.8 183,204.0 184,204.0 184,209.2 185,209.2 185,212.2 186,212.2 186,218.6 187,218.6 187,222.4 188,222.4 188,220.4 189,220.4 189,222.6 190,222.6 190,213.1 191,213.1 191,211.5 192,211.5 192,205.2 193,205.2 193,199.5 194,199.5 194,173.1 195,173.1 195,189.9 196,189.9 196,199.6 197,199.6 197,204.2 198,204.2 198,216.0 199,216.0 199,211.7 200,211.7 200,216.1 201,216.1 201,217.6 202,217.6 202,222.0 203,222.0 203,225.7 204,225.7 204,224.6 205,224.6 205,224.5 206,224.5 206,220.4 207,220.4 207,215.2 208,215.2 208,196.9 209,196.9 209,205.6 210,205.6 210,199.4 211,199.4 211,204.8 212,204.8 212,215.1 213,215.1 213,216.7 214,216.7 214,220.6 215,220.6 215,223.5 216,223.5 216,220.5 217,220.5 217,222.3 218,222.3 218,223.0 219,223.0 219,222.9 220,222.9 220,221.2 221,221.2 221,216.2 222,216.2 222,207.1 223,207.1 223,203.4 224,203.4 224,193.7 225,193.7 225,173.1 226,173.1 226,167.1 227,167.1 227,175.3 228,175.3 228,181.3 229,181.3 229,192.7 230,192.7 230,193.3 231,193.3 231,194.6 232,194.6 232,200.8 233,200.8 233,199.8 234,199.8 234,209.6 235,209.6 235,198.0 236,198.0 236,205.2 237,205.2 237,206.8 238,206.8 238,212.6 239,212.6 239,215.8 240,215.8 240,211.3 241,211.3 241,210.4 242,210.4 242,211.6 243,211.6 243,213.1 244,213.1 244,214.8 245,214.8 245,213.8 246,213.8 246,216.6 247,216.6 247,215.7 248,215.7 248,217.0 249,217.0 249,219.6 250,219.6 250,222.5 251,222.5 251,222.9 252,222.9 252,227.4 253,227.4 253,225.8 254,225.8 254,227.2 255,227.2 255,223.0 256,223.0 256,209.3 257,209.3 257,192.4 258,192.4 258,195.5 259,195.5 259,207.4 260,207.4 260,204.8 261,204.8 261,214.6 262,214.6 262,207.8 263,207.8 263,206.5 264,206.5 264,206.9 265,206.9 265,204.6 266,204.6 266,204.7 267,204.7 267,212.5 268,212.5 268,209.9 269,209.9 269,209.3 270,209.3 270,217.1 271,217.1 271,214.8 272,214.8 272,201.4 273,201.4 273,205.3 274,205.3 274,208.1 275,208.1 275,211.4 276,211.4 276,211.6 277,211.6 277,217.4 278,217.4 278,222.2 279,222.2 279,223.8 280,223.8 280,220.3 281,220.3 281,222.1 282,222.1 282,223.4 283,223.4 283,220.6 284,220.6 284,222.4 285,222.4 285,222.7 286,222.7 286,217.9 287,217.9 287,209.2 288,209.2 288,187.8 289,187.8 289,196.9 290,196.9 290,199.9 291,199.9 291,200.3 292,200.3 292,202.8 293,202.8 293,212.3 294,212.3 294,209.3 295,209.3 295,215.7 296,215.7 296,219.4 297,219.4 297,215.8 298,215.8 298,213.6 299,213.6 299,220.7 300,220.7 300,213.5 301,213.5 301,211.0 302,211.0 302,210.0 303,210.0 303,209.3 304,209.3 304,210.1 305,210.1 305,209.5 306,209.5 306,214.0 307,214.0 307,212.5 308,212.5 308,213.9 309,213.9 309,220.0 310,220.0 310,217.3 311,217.3 311,221.0 312,221.0 312,222.9 313,222.9 313,223.1 314,223.1 314,223.6 315,223.6 315,220.5 316,220.5 316,203.9 317,203.9 317,173.1 318,173.1 318,178.5 319,178.5 319,195.6 320,195.6 320,201.6 321,201.6 321,208.3 322,208.3 322,211.4 323,211.4 323,218.2 324,218.2 324,211.5 325,211.5 325,211.6 326,211.6 326,216.8 327,216.8 327,210.8 328,210.8 328,209.3 329,209.3 329,205.7 330,205.7 330,213.4 331,213.4 331,204.8 332,204.8 332,197.8 333,197.8 333,183.3 334,183.3 334,204.4 335,204.4 335,198.1 336,198.1 336,200.3 337,200.3 337,205.8 338,205.8 338,210.8 339,210.8 339,216.5 340,216.5 340,219.0 341,219.0 341,223.3 342,223.3 342,222.9 343,222.9 343,223.1 344,223.1 344,222.7 345,222.7 345,220.6 346,220.6 346,215.4 347,215.4 347,195.7 348,195.7 348,207.8 349,207.8 349,203.3 350,203.3 350,196.9 351,196.9 351,216.4 352,216.4 352,218.4 353,218.4 353,221.7 354,221.7 354,219.8 355,219.8 355,220.6 356,220.6 356,222.3 357,222.3 357,221.2 358,221.2 358,222.8 359,222.8 359,225.4 360,225.4 360,225.1 361,225.1 361,223.3 362,223.3 362,221.8 363,221.8 363,214.1 364,214.1 364,211.6 365,211.6 365,217.9 366,217.9 366,218.1 367,218.1 367,220.6 368,220.6 368,222.0 369,222.0 369,222.1 370,222.1 370,222.7 371,222.7 371,224.0 372,224.0 372,225.2 373,225.2 373,226.6 374,226.6 374,225.2 375,225.2 375,226.0 376,226.0 376,226.5 377,226.5 377,224.4 378,224.4 378,212.4 379,212.4 379,182.2 380,182.2 380,193.7 381,193.7 381,209.5 382,209.5 382,212.2 383,212.2 383,221.5 384,221.5 384,216.9 385,216.9 385,218.4 386,218.4 386,220.6 387,220.6 387,219.2 388,219.2 388,217.8 389,217.8 389,218.4 390,218.4 390,222.1 391,222.1 391,221.2 392,221.2 392,218.5 393,218.5 393,216.5 394,216.5 394,220.0 395,220.0 395,215.0 396,215.0 396,218.3 397,218.3 397,218.3 398,218.3 398,220.4 399,220.4 399,222.6 400,222.6 400,225.0 401,225.0 401,226.6 402,226.6 402,225.0 403,225.0 403,224.7 404,224.7 404,215.0 405,215.0 405,194.6 406,194.6 406,202.1 407,202.1 407,204.0 408,204.0 408,204.8 409,204.8 409,175.4 410,175.4 410,194.1 411,194.1 411,197.7 412,197.7 412,198.0 413,198.0 413,198.7 414,198.7 414,203.4 415,203.4 415,208.9 416,208.9 416,213.0 417,213.0 417,207.5 418,207.5 418,207.2 419,207.2 419,205.9 420,205.9 420,204.8 421,204.8 421,203.6 422,203.6 422,202.5 423,202.5 423,202.9 424,202.9 424,204.4 425,204.4 425,200.3 426,200.3 426,206.3 427,206.3 427,201.2 428,201.2 428,202.5 429,202.5 429,203.2 430,203.2 430,209.8 431,209.8 431,211.5 432,211.5 432,213.8 433,213.8 433,220.0 434,220.0 434,219.9 435,219.9 435,222.5 436,222.5 436,220.0 437,220.0 437,214.4 438,214.4 438,213.7 439,213.7 439,208.6 440,208.6 440,198.7 441,198.7 441,176.5 442,176.5 442,184.4 443,184.4 443,208.1 444,208.1 444,202.5 445,202.5 445,212.0 446,212.0 446,216.6 447,216.6 447,218.4 448,218.4 448,222.6 449,222.6 449,224.5 450,224.5 450,227.0 451,227.0 451,227.3 452,227.3 452,221.0 453,221.0 453,213.9 454,213.9 454,214.9 455,214.9 455,199.1 456,199.1 456,199.9 457,199.9 457,207.5 458,207.5 458,204.6 459,204.6 459,208.3 460,208.3 460,205.4 461,205.4 461,206.6 462,206.6 462,203.7 463,203.7 463,217.2 464,217.2 464,214.4 465,214.4 465,216.1 466,216.1 466,218.1 467,218.1 467,212.5 468,212.5 468,209.3 469,209.3 469,214.8 470,214.8 470,204.0 471,204.0 471,195.7 472,195.7 472,200.1 473,200.1 473,185.6 474,185.6 474,196.1 475,196.1 475,198.4 476,198.4 476,205.9 477,205.9 477,210.3 478,210.3 478,217.7 479,217.7 479,211.6 480,211.6 480,213.9 481,213.9 481,216.7 482,216.7 482,218.4 483,218.4 483,217.5 484,217.5 484,223.1 485,223.1 485,220.2 486,220.2 486,215.2 487,215.2 487,213.9 488,213.9 488,218.1 489,218.1 489,216.9 490,216.9 490,218.3 491,218.3 491,219.1 492,219.1 492,223.0 493,223.0 493,221.9 494,221.9 494,221.4 495,221.4 495,220.6 496,220.6 496,218.6 497,218.6 497,219.2 498,219.2 498,219.5 499,219.5 499,215.8 500,215.8 500,211.6 501,211.6 501,212.5 502,212.5 502,170.8 503,170.8 503,192.4 504,192.4 504,192.7 505,192.7 505,203.7 506,203.7 506,207.4 507,207.4 507,209.0 508,209.0 508,212.9 509,212.9 509,207.6 510,207.6 510,209.3 511,209.3 511,209.0 512,209.0 512,212.2 513,212.2 513,208.2 514,208.2 514,209.2 515,209.2 515,214.4 516,214.4 516,208.2 517,208.2 517,208.3 518,208.3 518,209.3 519,209.3 519,207.5 520,207.5 520,206.2 521,206.2 521,211.9 522,211.9 522,209.3 523,209.3 523,213.1 524,213.1 524,219.3 525,219.3 525,220.6 526,220.6 526,226.7 527,226.7 527,228.9 528,228.9 528,229.7 529,229.7 529,229.6 530,229.6 530,229.5 531,229.5 531,229.4 532,229.4 532,208.4 533,208.4 533,177.6 534,177.6 534,197.7 535,197.7 535,187.8 536,187.8 536,197.8 537,197.8 537,211.1 538,211.1 538,205.9 539,205.9 539,207.6 540,207.6 540,207.5 541,207.5 541,209.3 542,209.3 542,213.1 543,213.1 543,208.7 544,208.7 544,214.1 545,214.1 545,215.5 546,215.5 546,213.9 547,213.9 547,211.5 548,211.5 548,214.4 549,214.4 549,214.6 550,214.6 550,213.9 551,213.9 551,215.8 552,215.8 552,215.1 553,215.1 553,205.9 554,205.9 554,208.6 555,208.6 555,211.0 556,211.0 556,213.9 557,213.9 557,220.3 558,220.3 558,222.6 559,222.6 559,224.8 560,224.8 560,225.4 561,225.4 561,222.8 562,222.8 562,222.7 563,222.7 563,200.3 564,200.3 564,175.4 565,175.4 565,191.2 566,191.2 566,204.8 567,204.8 567,215.0 568,215.0 568,221.7 569,221.7 569,222.7 570,222.7 570,220.2 571,220.2 571,213.9 572,213.9 572,221.4 573,221.4 573,223.3 574,223.3 574,225.2 575,225.2 575,225.1 576,225.1 576,228.1 577,228.1 577,227.3 578,227.3 578,226.3 579,226.3 579,213.6 580,213.6 580,195.7 581,195.7 581,211.2 582,211.2 582,206.2 583,206.2 583,209.7 584,209.7 584,215.8 585,215.8 585,220.1 586,220.1 586,219.2 587,219.2 587,217.8 588,217.8 588,217.2 589,217.2 589,213.9 590,213.9 590,221.6 591,221.6 591,221.3 592,221.3 592,222.9 593,222.9 593,217.3 594,217.3 594,198.0 595,198.0 595,198.8 596,198.8 596,206.5 597,206.5 597,204.8 598,204.8 598,212.8 599,212.8 599,217.3 600,217.3 600,220.6 601,220.6 601,220.4 602,220.4 602,213.9 603,213.9 603,218.5 604,218.5 604,220.9 605,220.9 605,221.9 606,221.9 606,223.8 607,223.8 607,222.9 608,222.9 608,223.5 609,223.5 609,220.6 610,220.6 610,200.6 611,200.6 611,173.1 612,173.1 612,199.2 613,199.2 613,193.2 614,193.2 614,204.5 615,204.5 615,220.2 616,220.2 616,222.7 617,222.7 617,226.8 618,226.8 618,226.3 619,226.3 619,227.3 620,227.3 620,226.7 621,226.7 621,226.3 622,226.3 622,226.4 623,226.4 623,225.2 624,225.2 624,217.9 625,217.9 625,183.3 626,183.3 626,183.2 627,183.2 627,194.2 628,194.2 628,195.7 629,195.7 629,217.4 630,217.4 630,220.1 631,220.1 631,222.9 632,222.9 632,226.1 633,226.1 633,224.5 634,224.5 634,225.2 635,225.2 635,224.0 636,224.0 636,225.7 637,225.7 637,225.3 638,225.3 638,225.2 639,225.2 639,224.7 640,224.7 640,216.9 641,216.9 641,199.9 642,199.9 642,202.9 643,202.9 643,187.8 644,187.8 644,198.7 645,198.7 645,197.4 646,197.4 646,198.0 647,198.0 647,204.3 648,204.3 648,200.4 649,200.4 649,202.5 650,202.5 650,209.4 651,209.4 651,211.8 652,211.8 652,211.6 653,211.6 653,216.7 654,216.7 654,220.7 655,220.7 655,215.1 656,215.1 656,185.6 657,185.6 657,196.6 658,196.6 658,200.7 659,200.7 659,207.1 660,207.1 660,210.7 661,210.7 661,213.4 662,213.4 662,213.9 663,213.9 663,217.8 664,217.8 664,217.9 665,217.9 665,220.2 666,220.2 666,220.6 667,220.6 667,221.7 668,221.7 668,224.1 669,224.1 669,222.0 670,222.0 670,222.8 671,222.8 671,220.5 672,220.5 672,189.0 673,189.0 673,178.7 674,178.7 674,162.9 675,162.9 675,167.4 676,167.4 676,177.6 677,177.6 677,180.9 678,180.9 678,200.5 679,200.5 679,200.3 680,200.3 680,194.4 681,194.4 681,194.6 682,194.6 682,203.6 683,203.6 683,205.5 684,205.5 684,207.1 685,207.1 685,214.0 686,214.0 686,200.3 687,200.3 687,195.6 688,195.6 688,170.8 689,170.8 689,192.6 690,192.6 690,196.1 691,196.1 691,202.7 692,202.7 692,211.1 693,211.1 693,213.9 694,213.9 694,212.0 695,212.0 695,211.5 696,211.5 696,208.2 697,208.2 697,216.5 698,216.5 698,214.5 699,214.5 699,217.7 700,217.7 700,208.7 701,208.7 701,200.2 702,200.2 702,198.3 703,198.3 703,172.0 704,172.0 704,182.1 705,182.1 705,170.8 706,170.8 706,169.2 707,169.2 707,187.2 708,187.2 708,188.6 709,188.6 709,191.0 710,191.0 710,176.5 711,176.5 711,184.1 712,184.1 712,199.5 713,199.5 713,207.1 714,207.1 714,215.4 715,215.4 715,211.3 716,211.3 716,210.6 717,210.6 717,197.1 718,197.1 718,176.5 719,176.5 719,177.0 720,177.0 720,194.5 721,194.5 721,195.7 722,195.7 722,208.2 723,208.2 723,214.7 724,214.7 724,215.9 725,215.9 725,217.1 726,217.1 726,209.3 727,209.3 727,215.6 728,215.6 728,214.8 729,214.8 729,218.9 730,218.9 730,220.1 731,220.1 731,220.2 732,220.2 732,216.9 733,216.9 733,207.1 734,207.1 734,207.8 735,207.8 735,203.7 736,203.7 736,211.2 737,211.2 737,219.2 738,219.2 738,218.4 739,218.4 739,224.6 740,224.6 740,223.2 741,223.2 741,225.6 742,225.6 742,222.9 743,222.9 743,224.1 744,224.1 744,223.4 745,223.4 745,225.2 746,225.2 746,222.9 747,222.9 747,220.6 748,220.6 748,215.7 749,215.7 749,191.2 750,191.2 750,205.7 751,205.7 751,211.4 752,211.4 752,219.8 753,219.8 753,217.3 754,217.3 754,220.5 755,220.5 755,220.5 756,220.5 756,223.3 757,223.3 757,224.8 758,224.8 758,224.3 759,224.3 759,227.4 760,227.4 760,226.4 761,226.4 761,225.1 762,225.1 762,222.1 763,222.1 763,213.8 764,213.8 764,169.7 765,169.7 765,178.5 766,178.5 766,175.4 767,175.4 767,172.8 768,172.8 768,177.7 769,177.7 769,182.2 770,182.2 770,197.9 771,197.9 771,195.1 772,195.1 772,188.7 773,188.7 773,194.6 774,194.6 774,200.5 775,200.5 775,203.8 776,203.8 776,207.1 777,207.1 777,220.4 778,220.4 778,222.7 779,222.7 779,191.2 780,191.2 780,208.2 781,208.2 781,210.2 782,210.2 782,214.1 783,214.1 783,215.7 784,215.7 784,212.6 785,212.6 785,214.9 786,214.9 786,216.4 787,216.4 787,214.7 788,214.7 788,208.2 789,208.2 789,209.5 790,209.5 790,211.1 791,211.1 791,211.3 792,211.3 792,209.4 793,209.4 793,215.6 794,215.6 794,206.6 795,206.6 795,209.8 796,209.8 796,194.6 797,194.6 797,203.7 798,203.7 798,201.0 799,201.0 799,207.3 800,207.3 800,208.0 801,208.0 801,209.5 802,209.5 802,207.8 803,207.8 803,209.3 804,209.3 804,216.2 805,216.2 805,222.4 806,222.4 806,222.9 807,222.9 807,223.0 808,223.0 808,220.6 809,220.6 809,217.8 810,217.8 810,184.4 811,184.4 811,186.4 812,186.4 812,197.9 813,197.9 813,202.5 814,202.5 814,208.7 815,208.7 815,209.0 816,209.0 816,208.1 817,208.1 817,208.4 818,208.4 818,202.5 819,202.5 819,212.9 820,212.9 820,219.4 821,219.4 821,220.6 822,220.6 822,224.0 823,224.0 823,220.6 824,220.6 824,207.0 825,207.0 825,168.6 826,168.6 826,179.6 827,179.6 827,175.4 828,175.4 828,185.0 829,185.0 829,195.7 830,195.7 830,201.4 831,201.4 831,195.3 832,195.3 832,198.0 833,198.0 833,210.4 834,210.4 834,217.1 835,217.1 835,216.1 836,216.1 836,221.4 837,221.4 837,219.1 838,219.1 838,220.6 839,220.6 839,220.9 840,220.9 840,197.9 841,197.9 841,189.4 842,189.4 842,184.4 843,184.4 843,197.8 844,197.8 844,211.0 845,211.0 845,220.3 846,220.3 846,217.9 847,217.9 847,220.5 848,220.5 848,220.5 849,220.5 849,223.6 850,223.6 850,217.8 851,217.8 851,220.2 852,220.2 852,218.3 853,218.3 853,216.0 854,216.0 854,220.5 855,220.5 855,213.9 856,213.9 856,211.7 857,211.7 857,201.4 858,201.4 858,206.0 859,206.0 859,214.4 860,214.4 860,213.9 861,213.9 861,216.9 862,216.9 862,222.7 863,222.7 863,220.6 864,220.6 864,224.1 865,224.1 865,222.4 866,222.4 866,225.8 867,225.8 867,226.1 868,226.1 868,225.2 869,225.2 869,226.8 870,226.8 870,226.2 871,226.2 871,206.3 872,206.3 872,176.5 873,176.5 873,202.2 874,202.2 874,209.3 875,209.3 875,218.2 876,218.2 876,218.8 877,218.8 877,217.4 878,217.4 878,220.6 879,220.6 879,219.7 880,219.7 880,220.5 881,220.5 881,223.3 882,223.3 882,222.9 883,222.9 883,223.1 884,223.1 884,217.3 885,217.3 885,209.3 886,209.3 886,209.0 887,209.0 887,196.9 888,196.9 888,198.8 889,198.8 889,212.5 890,212.5 890,209.1 891,209.1 891,213.2 892,213.2 892,217.3 893,217.3 893,224.3 894,224.3 894,227.0 895,227.0 895,227.3 896,227.3 896,227.4 897,227.4 897,229.1 898,229.1 898,229.9 899,229.9 899,229.6 900,229.6 900,227.6 901,227.6 901,202.4 902,202.4 902,179.9 903,179.9 903,195.4 904,195.4 904,198.6 905,198.6 905,195.7 906,195.7 906,203.3 907,203.3 907,192.8 908,192.8 908,197.9 909,197.9 909,208.9 910,208.9 910,210.9 911,210.9 911,208.5 912,208.5 912,209.3 913,209.3 913,215.9 914,215.9 914,216.2 915,216.2 915,213.8 916,213.8 916,215.3 917,215.3 917,219.9 918,219.9 918,217.2 919,217.2 919,217.8 920,217.8 920,218.4 921,218.4 921,224.4 922,224.4 922,222.6 923,222.6 923,221.9 924,221.9 924,220.6 925,220.6 925,223.6 926,223.6 926,218.9 927,218.9 927,219.6 928,219.6 928,219.8 929,219.8 929,220.6 930,220.6 930,222.0 931,222.0 931,224.8 932,224.8 932,219.6 933,219.6 933,209.2 934,209.2 934,186.7 935,186.7 935,208.2 936,208.2 936,213.9 937,213.9 937,217.8 938,217.8 938,219.9 939,219.9 939,220.6 940,220.6 940,224.9 941,224.9 941,225.1 942,225.1 942,227.2 943,227.2 943,229.3 944,229.3 944,230.8 945,230.8 945,232.4 946,232.4 946,230.8 947,230.8 947,220.9 948,220.9 948,205.9 949,205.9 949,210.1 950,210.1 950,215.8 951,215.8 951,222.0 952,222.0 952,213.7 953,213.7 953,217.2 954,217.2 954,216.6 955,216.6 955,213.9 956,213.9 956,213.6 957,213.6 957,215.2 958,215.2 958,218.4 959,218.4 959,218.9 960,218.9 960,219.6 961,219.6 961,218.4 962,218.4 962,214.0 963,214.0 963,208.5 964,208.5 964,192.4 965,192.4 965,207.1 966,207.1 966,204.8 967,204.8 967,207.4 968,207.4 968,207.9 969,207.9 969,206.9 970,206.9 970,210.3 971,210.3 971,216.2 972,216.2 972,215.1 973,215.1 973,218.3 974,218.3 974,220.4 975,220.4 975,220.2 976,220.2 976,213.5 977,213.5 977,213.7 978,213.7 978,195.7 979,195.7 979,204.3 980,204.3 980,188.1 981,188.1 981,189.0 982,189.0 982,187.8 983,187.8 983,201.7 984,201.7 984,200.1 985,200.1 985,200.2 986,200.2 986,211.5 987,211.5 987,210.6 988,210.6 988,216.1 989,216.1 989,217.7 990,217.7 990,210.6 991,210.6 991,209.2 992,209.2 992,210.2 993,210.2 993,189.1 994,189.1 994,177.6 995,177.6 995,196.2 996,196.2 996,209.1 997,209.1 997,210.8 998,210.8 998,218.4 999,218.4 999,218.3 1000,218.3 1000,221.9 1001,221.9 1001,211.6 1002,211.6 1002,214.2 1003,214.2 1003,222.4 1004,222.4 1004,220.6 1005,220.6 1005,222.6 1006,222.6 1006,222.6 1007,222.6 1007,222.9 1008,222.9 1008,221.7 1009,221.7 1009,216.1 1010,216.1 1010,209.9 1011,209.9 1011,195.7 1012,195.7 1012,197.9 1013,197.9 1013,197.2 1014,197.2 1014,199.1 1015,199.1 1015,209.3 1016,209.3 1016,207.5 1017,207.5 1017,209.1 1018,209.1 1018,210.7 1019,210.7 1019,217.1 1020,217.1 1020,221.9 1021,221.9 1021,220.6 1022,220.6 1022,221.8 1023,221.8 1023,224.7 1024,224.7 1024,221.6 1025,221.6 1025,192.4 1026,192.4 1026,192.7 1027,192.7 1027,200.7 1028,200.7 1028,206.0 1029,206.0 1029,209.2 1030,209.2 1030,212.4 1031,212.4 1031,213.9 1032,213.9 1032,222.2 1033,222.2 1033,217.4 1034,217.4 1034,218.3 1035,218.3 1035,216.1 1036,216.1 1036,218.6 1037,218.6 1037,221.5 1038,221.5 1038,216.1 1039,216.1 1039,220.4 1040,220.4 1040,217.8 1041,217.8 1041,221.5 1042,221.5 1042,221.8 1043,221.8 1043,220.4 1044,220.4 1044,222.6 1045,222.6 1045,222.4 1046,222.4 1046,226.1 1047,226.1 1047,222.5 1048,222.5 1048,223.3 1049,223.3 1049,222.9 1050,222.9 1050,225.9 1051,225.9 1051,222.4 1052,222.4 1052,223.6 1053,223.6 1053,224.5 1054,224.5 1054,222.4 1055,222.4 1055,211.6 1056,211.6 1056,182.2 1057,182.2 1057,196.6 1058,196.6 1058,217.1 1059,217.1 1059,219.9 1060,219.9 1060,222.3 1061,222.3 1061,222.6 1062,222.6 1062,224.9 1063,224.9 1063,227.1 1064,227.1 1064,225.8 1065,225.8 1065,227.3 1066,227.3 1066,227.2 1067,227.2 1067,227.9 1068,227.9 1068,227.4 1069,227.4 1069,225.9 1070,225.9 1070,219.4 1071,219.4 1071,210.5 1072,210.5 1072,214.4 1073,214.4 1073,221.5 1074,221.5 1074,220.6 1075,220.6 1075,219.3 1076,219.3 1076,222.6 1077,222.6 1077,223.7 1078,223.7 1078,221.7 1079,221.7 1079,226.2 1080,226.2 1080,220.7 1081,220.7 1081,222.1 1082,222.1 1082,223.0 1083,223.0 1083,222.9 1084,222.9 1084,223.2 1085,223.2 1085,222.9 1086,222.9 1086,218.7 1087,218.7 1087,207.1 1088,207.1 1088,212.6 1089,212.6 1089,216.2 1090,216.2 1090,218.4 1091,218.4 1091,219.0 1092,219.0 1092,221.5 1093,221.5 1093,221.2 1094,221.2 1094,221.7 1095,221.7 1095,222.9 1096,222.9 1096,225.0 1097,225.0 1097,222.4 1098,222.4 1098,223.3 1099,223.3 1099,222.8 1100,222.8 1100,222.8 1101,222.8 1101,220.6 1102,220.6 1102,210.5 1103,210.5 1103,214.1 1104,214.1 1104,214.4 1105,214.4 1105,218.7 1106,218.7 1106,219.0 1107,219.0 1107,221.6 1108,221.6 1108,222.9 1109,222.9 1109,218.9 1110,218.9 1110,220.6 1111,220.6 1111,219.9 1112,219.9 1112,221.1 1113,221.1 1113,224.2 1114,224.2 1114,222.8 1115,222.8 1115,218.8 1116,218.8 1116,204.6 1117,204.6 1117,191.2 1118,191.2 1118,203.9 1119,203.9 1119,207.1 1120,207.1 1120,209.7 1121,209.7 1121,212.1 1122,212.1 1122,212.3 1123,212.3 1123,216.5 1124,216.5 1124,216.3 1125,216.3 1125,224.0 1126,224.0 1126,222.9 1127,222.9 1127,223.4 1128,223.4 1128,225.3 1129,225.3 1129,228.3 1130,228.3 1130,227.3 1131,227.3 1131,228.9 1132,228.9 1132,230.7 1133,230.7 1133,229.4 1134,229.4 1134,230.7 1135,230.7 1135,230.8 1136,230.8 1136,232.3 1137,232.3 1137,232.4 1138,232.4 1138,233.8 1139,233.8 1139,233.6 1140,233.6 1140,234.8 1141,234.8 1141,235.0 1142,235.0 1142,236.0 1141,236.0 1141,236.2 1140,236.2 1140,237.1 1139,237.1 1139,237.9 1138,237.9 1138,237.7 1137,237.7 1137,239.1 1136,239.1 1136,239.9 1135,239.9 1135,239.7 1134,239.7 1134,241.5 1133,241.5 1133,240.6 1132,240.6 1132,242.6 1131,242.6 1131,243.4 1130,243.4 1130,243.9 1129,243.9 1129,244.9 1128,244.9 1128,244.2 1127,244.2 1127,247.8 1126,247.8 1126,246.9 1125,246.9 1125,249.4 1124,249.4 1124,249.3 1123,249.3 1123,252.6 1122,252.6 1122,256.0 1121,256.0 1121,255.4 1120,255.4 1120,256.9 1119,256.9 1119,264.1 1118,264.1 1118,281.8 1117,281.8 1117,263.9 1116,263.9 1116,255.4 1115,255.4 1115,252.5 1114,252.5 1114,255.0 1113,255.0 1113,248.2 1112,248.2 1112,255.7 1111,255.7 1111,254.6 1110,254.6 1110,254.0 1109,254.0 1109,256.9 1108,256.9 1108,256.1 1107,256.1 1107,259.0 1106,259.0 1106,257.1 1105,257.1 1105,254.9 1104,254.9 1104,257.5 1103,257.5 1103,259.1 1102,259.1 1102,256.9 1101,256.9 1101,253.7 1100,253.7 1100,254.7 1099,254.7 1099,254.7 1098,254.7 1098,251.1 1097,251.1 1097,252.1 1096,252.1 1096,257.1 1095,257.1 1095,256.9 1094,256.9 1094,257.1 1093,257.1 1093,255.5 1092,255.5 1092,262.6 1091,262.6 1091,261.4 1090,261.4 1090,260.0 1089,260.0 1089,268.3 1088,268.3 1088,270.4 1087,270.4 1087,255.6 1086,255.6 1086,250.1 1085,250.1 1085,247.9 1084,247.9 1084,247.8 1083,247.8 1083,247.1 1082,247.1 1082,248.7 1081,248.7 1081,248.3 1080,248.3 1080,251.3 1079,251.3 1079,250.2 1078,250.2 1078,250.4 1077,250.4 1077,249.9 1076,249.9 1076,253.9 1075,253.9 1075,254.6 1074,254.6 1074,259.3 1073,259.3 1073,263.1 1072,263.1 1072,265.9 1071,265.9 1071,253.3 1070,253.3 1070,244.9 1069,244.9 1069,241.0 1068,241.0 1068,240.3 1067,240.3 1067,242.3 1066,242.3 1066,242.3 1065,242.3 1065,242.5 1064,242.5 1064,244.8 1063,244.8 1063,245.8 1062,245.8 1062,248.1 1061,248.1 1061,248.6 1060,248.6 1060,245.7 1059,245.7 1059,252.9 1058,252.9 1058,266.4 1057,266.4 1057,280.6 1056,280.6 1056,255.2 1055,255.2 1055,246.0 1054,246.0 1054,245.4 1053,245.4 1053,246.4 1052,246.4 1052,246.9 1051,246.9 1051,245.2 1050,245.2 1050,247.8 1049,247.8 1049,244.0 1048,244.0 1048,247.9 1047,247.9 1047,244.4 1046,244.4 1046,245.6 1045,245.6 1045,248.1 1044,248.1 1044,246.7 1043,246.7 1043,250.1 1042,250.1 1042,250.6 1041,250.6 1041,249.5 1040,249.5 1040,252.4 1039,252.4 1039,254.6 1038,254.6 1038,248.8 1037,248.8 1037,256.8 1036,256.8 1036,256.9 1035,256.9 1035,254.7 1034,254.7 1034,254.2 1033,254.2 1033,257.8 1032,257.8 1032,259.1 1031,259.1 1031,259.4 1030,259.4 1030,262.8 1029,262.8 1029,263.9 1028,263.9 1028,267.8 1027,267.8 1027,271.6 1026,271.6 1026,289.7 1025,289.7 1025,250.2 1024,250.2 1024,243.7 1023,243.7 1023,245.5 1022,245.5 1022,247.8 1021,247.8 1021,246.9 1020,246.9 1020,248.5 1019,248.5 1019,253.6 1018,253.6 1018,254.7 1017,254.7 1017,255.4 1016,255.4 1016,258.0 1015,258.0 1015,259.1 1014,259.1 1014,262.5 1013,262.5 1013,261.1 1012,261.1 1012,261.4 1011,261.4 1011,255.9 1010,255.9 1010,259.1 1009,259.1 1009,251.4 1008,251.4 1008,252.3 1007,252.3 1007,249.9 1006,249.9 1006,256.9 1005,256.9 1005,256.9 1004,256.9 1004,254.2 1003,254.2 1003,258.8 1002,258.8 1002,263.7 1001,263.7 1001,257.0 1000,257.0 1000,259.2 999,259.2 999,254.0 998,254.0 998,266.4 997,266.4 997,266.8 996,266.8 996,274.4 995,274.4 995,281.8 994,281.8 994,262.3 993,262.3 993,267.8 992,267.8 992,263.7 991,263.7 991,258.7 990,258.7 990,256.2 989,256.2 989,263.8 988,263.8 988,261.8 987,261.8 987,259.8 986,259.8 986,262.0 985,262.0 985,266.0 984,266.0 984,259.2 983,259.2 983,274.7 982,274.7 982,275.0 981,275.0 981,266.2 980,266.2 980,271.9 979,271.9 979,268.2 978,268.2 978,267.5 977,267.5 977,263.7 976,263.7 976,262.5 975,262.5 975,261.9 974,261.9 974,259.2 973,259.2 973,262.4 972,262.4 972,263.1 971,263.1 971,258.4 970,258.4 970,262.1 969,262.1 969,263.0 968,263.0 968,272.6 967,272.6 967,272.7 966,272.7 966,269.2 965,269.2 965,286.3 964,286.3 964,258.5 963,258.5 963,253.2 962,253.2 962,250.1 961,250.1 961,248.0 960,248.0 960,249.6 959,249.6 959,250.1 958,250.1 958,252.4 957,252.4 957,250.6 956,250.6 956,252.3 955,252.3 955,250.3 954,250.3 954,252.0 953,252.0 953,251.2 952,251.2 952,248.7 951,248.7 951,253.2 950,253.2 950,261.2 949,261.2 949,281.8 948,281.8 948,256.0 947,256.0 947,240.6 946,240.6 946,238.4 945,238.4 945,241.9 944,241.9 944,244.3 943,244.3 943,245.8 942,245.8 942,244.4 941,244.4 941,247.4 940,247.4 940,252.3 939,252.3 939,254.3 938,254.3 938,256.0 937,256.0 937,263.7 936,263.7 936,267.7 935,267.7 935,293.1 934,293.1 934,266.2 933,266.2 933,248.4 932,248.4 932,246.1 931,246.1 931,246.6 930,246.6 930,252.3 929,252.3 929,252.3 928,252.3 928,250.2 927,250.2 927,253.5 926,253.5 926,250.0 925,250.0 925,254.6 924,254.6 924,255.9 923,255.9 923,250.7 922,250.7 922,254.7 921,254.7 921,256.9 920,256.9 920,253.6 919,253.6 919,254.8 918,254.8 918,259.7 917,259.7 917,262.3 916,262.3 916,261.4 915,261.4 915,264.0 914,264.0 914,267.2 913,267.2 913,265.9 912,265.9 912,264.3 911,264.3 911,265.8 910,265.8 910,273.3 909,273.3 909,270.5 908,270.5 908,270.5 907,270.5 907,264.9 906,264.9 906,272.7 905,272.7 905,277.5 904,277.5 904,268.5 903,268.5 903,286.3 902,286.3 902,261.5 901,261.5 901,244.8 900,244.8 900,241.1 899,241.1 899,241.4 898,241.4 898,242.0 897,242.0 897,243.3 896,243.3 896,243.7 895,243.7 895,246.9 894,246.9 894,247.4 893,247.4 893,250.6 892,250.6 892,247.6 891,247.6 891,254.8 890,254.8 890,253.0 889,253.0 889,263.1 888,263.1 888,263.7 887,263.7 887,262.3 886,262.3 886,261.4 885,261.4 885,253.2 884,253.2 884,247.3 883,247.3 883,247.9 882,247.9 882,247.8 881,247.8 881,251.4 880,251.4 880,248.1 879,248.1 879,252.3 878,252.3 878,250.8 877,250.8 877,253.2 876,253.2 876,260.3 875,260.3 875,263.7 874,263.7 874,270.8 873,270.8 873,282.9 872,282.9 872,262.6 871,262.6 871,244.2 870,244.2 870,242.8 869,242.8 869,245.5 868,245.5 868,245.3 867,245.3 867,246.9 866,246.9 866,245.2 865,245.2 865,252.0 864,252.0 864,252.3 863,252.3 863,253.5 862,253.5 862,251.3 861,251.3 861,259.1 860,259.1 860,261.0 859,261.0 859,268.5 858,268.5 858,268.2 857,268.2 857,262.0 856,262.0 856,256.9 855,256.9 855,256.7 854,256.7 854,254.3 853,254.3 853,254.6 852,254.6 852,254.5 851,254.5 851,257.6 850,257.6 850,257.5 849,257.5 849,258.8 848,258.8 848,257.0 847,257.0 847,254.1 846,254.1 846,258.6 845,258.6 845,262.5 844,262.5 844,268.0 843,268.0 843,272.7 842,272.7 842,279.5 841,279.5 841,279.5 840,279.5 840,258.1 839,258.1 839,250.1 838,250.1 838,253.0 837,253.0 837,247.1 836,247.1 836,254.6 835,254.6 835,257.1 834,257.1 834,258.2 833,258.2 833,268.2 832,268.2 832,269.1 831,269.1 831,272.1 830,272.1 830,268.2 829,268.2 829,265.4 828,265.4 828,281.8 827,281.8 827,267.5 826,267.5 826,282.9 825,282.9 825,259.1 824,259.1 824,248.0 823,248.0 823,250.7 822,250.7 822,252.3 821,252.3 821,252.6 820,252.6 820,256.4 819,256.4 819,268.2 818,268.2 818,264.9 817,264.9 817,264.3 816,264.3 816,263.7 815,263.7 815,258.4 814,258.4 814,263.7 813,263.7 813,268.6 812,268.6 812,285.3 811,285.3 811,290.8 810,290.8 810,255.7 809,255.7 809,250.1 808,250.1 808,247.5 807,247.5 807,245.6 806,245.6 806,244.0 805,244.0 805,252.1 804,252.1 804,256.9 803,256.9 803,258.7 802,258.7 802,253.7 801,253.7 801,262.2 800,262.2 800,261.7 799,261.7 799,266.5 798,266.5 798,266.3 797,266.3 797,267.1 796,267.1 796,261.6 795,261.6 795,264.4 794,264.4 794,263.3 793,263.3 793,256.0 792,256.0 792,259.3 791,259.3 791,258.2 790,258.2 790,258.5 789,258.5 789,261.4 788,261.4 788,256.9 787,256.9 787,253.2 786,253.2 786,259.2 785,259.2 785,262.9 784,262.9 784,259.7 783,259.7 783,272.2 782,272.2 782,276.4 781,276.4 781,291.3 780,291.3 780,296.5 779,296.5 779,253.3 778,253.3 778,249.1 777,249.1 777,268.2 776,268.2 776,268.1 775,268.1 775,268.9 774,268.9 774,274.0 773,274.0 773,282.0 772,282.0 772,289.2 771,289.2 771,287.6 770,287.6 770,288.6 769,288.6 769,280.4 768,280.4 768,290.9 767,290.9 767,302.1 766,302.1 766,300.5 765,300.5 765,290.8 764,290.8 764,258.5 763,258.5 763,248.2 762,248.2 762,245.6 761,245.6 761,243.4 760,243.4 760,241.9 759,241.9 759,241.4 758,241.4 758,243.5 757,243.5 757,244.1 756,244.1 756,242.9 755,242.9 755,245.7 754,245.7 754,244.6 753,244.6 753,254.1 752,254.1 752,257.2 751,257.2 751,259.4 750,259.4 750,278.4 749,278.4 749,252.4 748,252.4 748,247.8 747,247.8 747,245.3 746,245.3 746,243.3 745,243.3 745,245.1 744,245.1 744,246.9 743,246.9 743,247.8 742,247.8 742,248.7 741,248.7 741,245.3 740,245.3 740,250.6 739,250.6 739,252.3 738,252.3 738,251.2 737,251.2 737,262.6 736,262.6 736,265.9 735,265.9 735,258.0 734,258.0 734,261.4 733,261.4 733,255.0 732,255.0 732,249.9 731,249.9 731,250.5 730,250.5 730,254.5 729,254.5 729,251.0 728,251.0 728,255.5 727,255.5 727,259.1 726,259.1 726,251.2 725,251.2 725,256.9 724,256.9 724,258.2 723,258.2 723,263.2 722,263.2 722,270.4 721,270.4 721,266.2 720,266.2 720,279.6 719,279.6 719,287.4 718,287.4 718,266.9 717,266.9 717,257.8 716,257.8 716,254.8 715,254.8 715,257.9 714,257.9 714,261.4 713,261.4 713,263.0 712,263.0 712,269.9 711,269.9 711,278.4 710,278.4 710,278.9 709,278.9 709,279.5 708,279.5 708,286.5 707,286.5 707,277.8 706,277.8 706,288.3 705,288.3 705,289.5 704,289.5 704,302.1 703,302.1 703,281.1 702,281.1 702,272.8 701,272.8 701,267.6 700,267.6 700,261.8 699,261.8 699,265.7 698,265.7 698,260.5 697,260.5 697,268.2 696,268.2 696,268.4 695,268.4 695,263.1 694,263.1 694,261.4 693,261.4 693,262.5 692,262.5 692,269.7 691,269.7 691,274.5 690,274.5 690,278.2 689,278.2 689,298.7 688,298.7 688,277.0 687,277.0 687,272.7 686,272.7 686,256.3 685,256.3 685,263.7 684,263.7 684,261.6 683,261.6 683,264.5 682,264.5 682,265.9 681,265.9 681,260.9 680,260.9 680,261.4 679,261.4 679,260.9 678,260.9 678,275.1 677,275.1 677,277.2 676,277.2 676,273.7 675,273.7 675,287.4 674,287.4 674,275.1 673,275.1 673,268.2 672,268.2 672,246.4 671,246.4 671,248.0 670,248.0 670,248.4 669,248.4 669,249.0 668,249.0 668,251.7 667,251.7 667,252.3 666,252.3 666,250.6 665,250.6 665,251.1 664,251.1 664,251.3 663,251.3 663,254.1 662,254.1 662,255.0 661,255.0 661,255.3 660,255.3 660,261.4 659,261.4 659,269.1 658,269.1 658,264.2 657,264.2 657,284.0 656,284.0 656,253.4 655,253.4 655,249.6 654,249.6 654,250.4 653,250.4 653,252.3 652,252.3 652,252.2 651,252.2 651,254.8 650,254.8 650,259.1 649,259.1 649,260.6 648,260.6 648,259.2 647,259.2 647,261.4 646,261.4 646,255.1 645,255.1 645,263.8 644,263.8 644,268.2 643,268.2 643,261.0 642,261.0 642,257.2 641,257.2 641,251.9 640,251.9 640,245.1 639,245.1 639,245.5 638,245.5 638,244.5 637,244.5 637,244.7 636,244.7 636,245.5 635,245.5 635,245.5 634,245.5 634,246.6 633,246.6 633,247.0 632,247.0 632,250.1 631,250.1 631,250.5 630,250.5 630,262.1 629,262.1 629,272.7 628,272.7 628,272.5 627,272.5 627,281.5 626,281.5 626,299.9 625,299.9 625,256.3 624,256.3 624,245.5 623,245.5 623,244.7 622,244.7 622,241.2 621,241.2 621,243.8 620,243.8 620,243.4 619,243.4 619,245.2 618,245.2 618,247.3 617,247.3 617,249.3 616,249.3 616,252.2 615,252.2 615,260.9 614,260.9 614,272.8 613,272.8 613,279.4 612,279.4 612,279.5 611,279.5 611,259.2 610,259.2 610,250.1 609,250.1 609,247.3 608,247.3 608,245.6 607,245.6 607,247.1 606,247.1 606,249.6 605,249.6 605,252.2 604,252.2 604,252.8 603,252.8 603,254.6 602,254.6 602,251.3 601,251.3 601,252.3 600,252.3 600,255.0 599,255.0 599,255.1 598,255.1 598,268.2 597,268.2 597,265.3 596,265.3 596,271.6 595,271.6 595,277.2 594,277.2 594,256.2 593,256.2 593,245.6 592,245.6 592,248.4 591,248.4 591,248.0 590,248.0 590,254.6 589,254.6 589,256.1 588,256.1 588,250.3 587,250.3 587,250.7 586,250.7 586,252.7 585,252.7 585,255.5 584,255.5 584,258.2 583,258.2 583,262.6 582,262.6 582,268.8 581,268.8 581,277.2 580,277.2 580,251.7 579,251.7 579,243.6 578,243.6 578,241.1 577,241.1 577,241.1 576,241.1 576,243.2 575,243.2 575,243.3 574,243.3 574,244.0 573,244.0 573,247.2 572,247.2 572,252.3 571,252.3 571,247.2 570,247.2 570,243.0 569,243.0 569,246.6 568,246.6 568,254.6 567,254.6 567,261.4 566,261.4 566,271.5 565,271.5 565,286.3 564,286.3 564,253.6 563,253.6 563,245.7 562,245.7 562,244.2 561,244.2 561,243.5 560,243.5 560,243.5 559,243.5 559,244.7 558,244.7 558,249.4 557,249.4 557,252.3 556,252.3 556,249.6 555,249.6 555,252.2 554,252.2 554,261.4 553,261.4 553,259.2 552,259.2 552,257.7 551,257.7 551,256.9 550,256.9 550,257.9 549,257.9 549,254.1 548,254.1 548,252.1 547,252.1 547,254.6 546,254.6 546,255.9 545,255.9 545,258.3 544,258.3 544,254.8 543,254.8 543,258.9 542,258.9 542,259.2 541,259.2 541,257.3 540,257.3 540,259.4 539,259.4 539,261.4 538,261.4 538,263.8 537,263.8 537,260.7 536,260.7 536,263.7 535,263.7 535,271.1 534,271.1 534,276.1 533,276.1 533,251.2 532,251.2 532,240.1 531,240.1 531,239.8 530,239.8 530,240.1 529,240.1 529,241.0 528,241.0 528,241.6 527,241.6 527,244.6 526,244.6 526,247.8 525,247.8 525,249.6 524,249.6 524,258.8 523,258.8 523,263.7 522,263.7 522,254.0 521,254.0 521,256.4 520,256.4 520,261.4 519,261.4 519,261.6 518,261.6 518,265.4 517,265.4 517,264.5 516,264.5 516,254.8 515,254.8 515,267.2 514,267.2 514,265.9 513,265.9 513,268.4 512,268.4 512,267.0 511,267.0 511,259.0 510,259.0 510,260.1 509,260.1 509,260.2 508,260.2 508,261.6 507,261.6 507,260.0 506,260.0 506,268.4 505,268.4 505,271.6 504,271.6 504,269.1 503,269.1 503,296.5 502,296.5 502,261.9 501,261.9 501,256.9 500,256.9 500,251.5 499,251.5 499,252.4 498,252.4 498,252.1 497,252.1 497,256.2 496,256.2 496,263.7 495,263.7 495,259.2 494,259.2 494,257.4 493,257.4 493,253.1 492,253.1 492,252.6 491,252.6 491,252.8 490,252.8 490,257.8 489,257.8 489,259.4 488,259.4 488,271.6 487,271.6 487,260.5 486,260.5 486,251.5 485,251.5 485,247.0 484,247.0 484,249.3 483,249.3 483,252.3 482,252.3 482,253.8 481,253.8 481,254.5 480,254.5 480,259.1 479,259.1 479,262.7 478,262.7 478,259.9 477,259.9 477,263.7 476,263.7 476,266.5 475,266.5 475,270.9 474,270.9 474,281.8 473,281.8 473,279.8 472,279.8 472,277.2 471,277.2 471,262.3 470,262.3 470,258.9 469,258.9 469,259.1 468,259.1 468,256.1 467,256.1 467,255.7 466,255.7 466,254.6 465,254.6 465,252.8 464,252.8 464,255.4 463,255.4 463,263.7 462,263.7 462,262.9 461,262.9 461,262.2 460,262.2 460,260.8 459,260.8 459,262.8 458,262.8 458,270.4 457,270.4 457,289.8 456,289.8 456,293.1 455,293.1 455,257.1 454,257.1 454,250.1 453,250.1 453,244.2 452,244.2 452,242.5 451,242.5 451,241.5 450,241.5 450,243.1 449,243.1 449,246.5 448,246.5 448,250.1 447,250.1 447,250.2 446,250.2 446,256.8 445,256.8 445,268.2 444,268.2 444,263.3 443,263.3 443,276.2 442,276.2 442,306.7 441,306.7 441,279.2 440,279.2 440,261.5 439,261.5 439,250.3 438,250.3 438,251.9 437,251.9 437,251.0 436,251.0 436,252.8 435,252.8 435,252.9 434,252.9 434,255.6 433,255.6 433,254.5 432,254.5 432,259.2 431,259.2 431,258.6 430,258.6 430,262.7 429,262.7 429,268.2 428,268.2 428,269.6 427,269.6 427,267.6 426,267.6 426,268.2 425,268.2 425,265.3 424,265.3 424,269.8 423,269.8 423,265.9 422,265.9 422,258.4 421,258.4 421,260.4 420,260.4 420,261.5 419,261.5 419,262.8 418,262.8 418,261.0 417,261.0 417,256.8 416,256.8 416,257.0 415,257.0 415,257.4 414,257.4 414,257.3 413,257.3 413,261.4 412,261.4 412,267.0 411,267.0 411,276.6 410,276.6 410,290.8 409,290.8 409,256.7 408,256.7 408,258.4 407,258.4 407,264.2 406,264.2 406,275.0 405,275.0 405,253.4 404,253.4 404,242.6 403,242.6 403,240.9 402,240.9 402,243.0 401,243.0 401,243.6 400,243.6 400,241.9 399,241.9 399,245.7 398,245.7 398,246.8 397,246.8 397,246.4 396,246.4 396,250.1 395,250.1 395,249.5 394,249.5 394,246.8 393,246.8 393,250.3 392,250.3 392,248.4 391,248.4 391,250.0 390,250.0 390,252.4 389,252.4 389,253.5 388,253.5 388,252.9 387,252.9 387,249.6 386,249.6 386,254.6 385,254.6 385,249.9 384,249.9 384,256.2 383,256.2 383,261.4 382,261.4 382,263.9 381,263.9 381,271.0 380,271.0 380,295.3 379,295.3 379,255.1 378,255.1 378,244.3 377,244.3 377,243.7 376,243.7 376,241.2 375,241.2 375,242.1 374,242.1 374,243.4 373,243.4 373,245.5 372,245.5 372,245.6 371,245.6 371,246.5 370,246.5 370,246.7 369,246.7 369,249.6 368,249.6 368,250.1 367,250.1 367,250.3 366,250.3 366,254.6 365,254.6 365,256.9 364,256.9 364,251.6 363,251.6 363,251.0 362,251.0 362,247.6 361,247.6 361,245.6 360,245.6 360,246.3 359,246.3 359,244.2 358,244.2 358,247.6 357,247.6 357,247.7 356,247.7 356,247.9 355,247.9 355,248.1 354,248.1 354,249.4 353,249.4 353,250.1 352,250.1 352,256.3 351,256.3 351,263.7 350,263.7 350,266.3 349,266.3 349,266.6 348,266.6 348,270.4 347,270.4 347,252.9 346,252.9 346,250.1 345,250.1 345,245.2 344,245.2 344,246.1 343,246.1 343,245.6 342,245.6 342,246.4 341,246.4 341,247.9 340,247.9 340,254.9 339,254.9 339,257.3 338,257.3 338,260.1 337,260.1 337,263.7 336,263.7 336,265.4 335,265.4 335,261.9 334,261.9 334,268.3 333,268.3 333,275.8 332,275.8 332,277.2 331,277.2 331,261.1 330,261.1 330,267.4 329,267.4 329,263.7 328,263.7 328,261.8 327,261.8 327,258.2 326,258.2 326,261.4 325,261.4 325,258.0 324,258.0 324,264.6 323,264.6 323,263.6 322,263.6 322,264.0 321,264.0 321,266.3 320,266.3 320,268.3 319,268.3 319,285.5 318,285.5 318,294.2 317,294.2 317,264.1 316,264.1 316,252.2 315,252.2 315,249.0 314,249.0 314,250.9 313,250.9 313,250.1 312,250.1 312,252.5 311,252.5 311,252.2 310,252.2 310,256.3 309,256.3 309,260.5 308,260.5 308,259.4 307,259.4 307,257.5 306,257.5 306,264.4 305,264.4 305,253.8 304,253.8 304,263.7 303,263.7 303,261.9 302,261.9 302,262.0 301,262.0 301,257.1 300,257.1 300,255.3 299,255.3 299,259.2 298,259.2 298,252.4 297,252.4 297,260.0 296,260.0 296,260.7 295,260.7 295,261.4 294,261.4 294,257.9 293,257.9 293,259.2 292,259.2 292,263.7 291,263.7 291,259.5 290,259.5 290,273.5 289,273.5 289,281.8 288,281.8 288,265.1 287,265.1 287,254.9 286,254.9 286,245.8 285,245.8 285,247.0 284,247.0 284,246.5 283,246.5 283,247.8 282,247.8 282,248.5 281,248.5 281,250.3 280,250.3 280,253.0 279,253.0 279,249.7 278,249.7 278,255.9 277,255.9 277,256.9 276,256.9 276,260.7 275,260.7 275,265.1 274,265.1 274,267.5 273,267.5 273,268.2 272,268.2 272,264.1 271,264.1 271,257.7 270,257.7 270,259.1 269,259.1 269,258.7 268,258.7 268,262.0 267,262.0 267,258.6 266,258.6 266,264.1 265,264.1 265,261.8 264,261.8 264,263.2 263,263.2 263,260.8 262,260.8 262,270.0 261,270.0 261,268.2 260,268.2 260,277.0 259,277.0 259,284.2 258,284.2 258,286.3 257,286.3 257,257.5 256,257.5 256,247.7 255,247.7 255,243.4 254,243.4 254,242.5 253,242.5 253,242.4 252,242.4 252,245.5 251,245.5 251,246.9 250,246.9 250,246.8 249,246.8 249,246.7 248,246.7 248,249.8 247,249.8 247,255.2 246,255.2 246,254.8 245,254.8 245,256.0 244,256.0 244,261.1 243,261.1 243,261.4 242,261.4 242,253.2 241,253.2 241,249.6 240,249.6 240,255.5 239,255.5 239,255.3 238,255.3 238,260.4 237,260.4 237,262.5 236,262.5 236,263.7 235,263.7 235,261.1 234,261.1 234,263.6 233,263.6 233,264.5 232,264.5 232,268.2 231,268.2 231,265.7 230,265.7 230,275.3 229,275.3 229,278.3 228,278.3 228,284.6 227,284.6 227,274.3 226,274.3 226,304.4 225,304.4 225,284.1 224,284.1 224,265.5 223,265.5 223,257.5 222,257.5 222,250.1 221,250.1 221,244.3 220,244.3 220,243.4 219,243.4 219,244.1 218,244.1 218,244.4 217,244.4 217,246.1 216,246.1 216,246.8 215,246.8 215,247.8 214,247.8 214,248.0 213,248.0 213,256.8 212,256.8 212,272.7 211,272.7 211,269.1 210,269.1 210,277.0 209,277.0 209,275.0 208,275.0 208,256.8 207,256.8 207,252.6 206,252.6 206,246.7 205,246.7 205,246.1 204,246.1 204,249.3 203,249.3 203,251.0 202,251.0 202,247.3 201,247.3 201,254.6 200,254.6 200,258.2 199,258.2 199,265.5 198,265.5 198,268.3 197,268.3 197,273.2 196,273.2 196,281.4 195,281.4 195,293.1 194,293.1 194,283.0 193,283.0 193,263.8 192,263.8 192,263.7 191,263.7 191,258.4 190,258.4 190,252.8 189,252.8 189,250.5 188,250.5 188,248.9 187,248.9 187,248.9 186,248.9 186,252.2 185,252.2 185,257.0 184,257.0 184,258.8 183,258.8 183,263.1 182,263.1 182,265.6 181,265.6 181,268.2 180,268.2 180,263.8 179,263.8 179,267.8 178,267.8 178,273.8 177,273.8 177,261.8 176,261.8 176,266.5 175,266.5 175,268.0 174,268.0 174,263.7 173,263.7 173,263.5 172,263.5 172,262.8 171,262.8 171,261.1 170,261.1 170,266.4 169,266.4 169,272.4 168,272.4 168,271.0 167,271.0 167,272.4 166,272.4 166,288.6 165,288.6 165,288.8 164,288.8 164,311.2 163,311.2 163,292.5 162,292.5 162,272.9 161,272.9 161,265.9 160,265.9 160,261.4 159,261.4 159,260.1 158,260.1 158,259.1 157,259.1 157,255.7 156,255.7 156,256.9 155,256.9"/>
<polygon fill="#6464dc" points="155,225.5 156,225.5 156,225.2 157,225.2 157,224.4 158,224.4 158,222.7 159,222.7 159,219.6 160,219.6 160,217.3 161,217.3 161,215.3 162,215.3 162,213.1 163,213.1 163,211.1 164,211.1 164,211.7 165,211.7 165,213.8 166,213.8 166,215.4 167,215.4 167,217.9 168,217.9 168,219.1 169,219.1 169,220.7 170,220.7 170,221.4 171,221.4 171,221.2 172,221.2 172,221.2 173,221.2 173,221.8 174,221.8 174,220.8 175,220.8 175,220.3 176,220.3 176,219.2 177,219.2 177,219.1 178,219.1 178,219.2 179,219.2 179,220.0 180,220.0 180,219.9 181,219.9 181,221.9 182,221.9 182,222.6 183,222.6 183,224.3 184,224.3 184,225.0 185,225.0 185,226.2 186,226.2 186,227.2 187,227.2 187,227.5 188,227.5 188,227.2 189,227.2 189,226.7 190,226.7 190,225.3 191,225.3 191,223.4 192,223.4 192,220.2 193,220.2 193,218.1 194,218.1 194,217.6 195,217.6 195,216.8 196,216.8 196,219.1 197,219.1 197,221.5 198,221.5 198,223.3 199,223.3 199,224.8 200,224.8 200,226.5 201,226.5 201,227.9 202,227.9 202,228.5 203,228.5 203,229.1 204,229.1 204,229.3 205,229.3 205,228.5 206,228.5 206,226.6 207,226.6 207,224.5 208,224.5 208,222.5 209,222.5 209,220.7 210,220.7 210,221.3 211,221.3 211,223.3 212,223.3 212,224.9 213,224.9 213,226.8 214,226.8 214,228.8 215,228.8 215,229.7 216,229.7 216,230.4 217,230.4 217,230.5 218,230.5 218,230.6 219,230.6 219,230.3 220,230.3 220,229.1 221,229.1 221,227.1 222,227.1 222,224.0 223,224.0 223,220.1 224,220.1 224,217.1 225,217.1 225,214.2 226,214.2 226,213.0 227,213.0 227,212.2 228,212.2 228,214.3 229,214.3 229,216.7 230,216.7 230,217.5 231,217.5 231,219.2 232,219.2 232,220.0 233,220.0 233,220.3 234,220.3 234,221.8 235,221.8 235,221.9 236,221.9 236,223.5 237,223.5 237,223.9 238,223.9 238,224.7 239,224.7 239,225.8 240,225.8 240,225.5 241,225.5 241,225.1 242,225.1 242,225.3 243,225.3 243,225.5 244,225.5 244,226.1 245,226.1 245,226.2 246,226.2 246,227.0 247,227.0 247,228.3 248,228.3 248,228.9 249,228.9 249,229.2 250,229.2 250,230.0 251,230.0 251,230.4 252,230.4 252,230.9 253,230.9 253,230.9 254,230.9 254,229.8 255,229.8 255,227.6 256,227.6 256,225.1 257,225.1 257,223.1 258,223.1 258,221.3 259,221.3 259,220.8 260,220.8 260,221.0 261,221.0 261,221.9 262,221.9 262,222.5 263,222.5 263,223.2 264,223.2 264,222.8 265,222.8 265,223.9 266,223.9 266,223.3 267,223.3 267,224.2 268,224.2 268,224.1 269,224.1 269,223.8 270,223.8 270,224.1 271,224.1 271,223.4 272,223.4 272,223.1 273,223.1 273,223.6 274,223.6 274,224.2 275,224.2 275,224.7 276,224.7 276,225.4 277,225.4 277,226.4 278,226.4 278,227.2 279,227.2 279,228.1 280,228.1 280,228.5 281,228.5 281,229.1 282,229.1 282,229.5 283,229.5 283,229.7 284,229.7 284,229.3 285,229.3 285,227.6 286,227.6 286,225.7 287,225.7 287,223.4 288,223.4 288,221.5 289,221.5 289,220.1 290,220.1 290,220.8 291,220.8 291,221.3 292,221.3 292,222.6 293,222.6 293,223.2 294,223.2 294,223.4 295,223.4 295,224.6 296,224.6 296,224.4 297,224.4 297,225.1 298,225.1 298,225.3 299,225.3 299,225.4 300,225.4 300,224.6 301,224.6 301,224.6 302,224.6 302,224.8 303,224.8 303,223.8 304,223.8 304,223.8 305,223.8 305,224.5 306,224.5 306,224.7 307,224.7 307,225.7 308,225.7 308,226.2 309,226.2 309,226.9 310,226.9 310,228.1 311,228.1 311,228.5 312,228.5 312,229.1 313,229.1 313,229.3 314,229.3 314,227.7 315,227.7 315,225.7 316,225.7 316,223.9 317,223.9 317,221.7 318,221.7 318,221.0 319,221.0 319,220.8 320,220.8 320,221.5 321,221.5 321,221.9 322,221.9 322,223.1 323,223.1 323,223.7 324,223.7 324,224.1 325,224.1 325,224.2 326,224.2 326,224.3 327,224.3 327,224.2 328,224.2 328,223.3 329,223.3 329,222.4 330,222.4 330,221.8 331,221.8 331,221.5 332,221.5 332,220.0 333,220.0 333,219.9 334,219.9 334,220.6 335,220.6 335,220.6 336,220.6 336,221.9 337,221.9 337,224.1 338,224.1 338,225.4 339,225.4 339,226.8 340,226.8 340,227.8 341,227.8 341,229.2 342,229.2 342,229.7 343,229.7 343,229.8 344,229.8 344,229.3 345,229.3 345,227.5 346,227.5 346,225.3 347,225.3 347,223.2 348,223.2 348,221.8 349,221.8 349,222.0 350,222.0 350,223.5 351,223.5 351,224.9 352,224.9 352,226.6 353,226.6 353,228.6 354,228.6 354,229.3 355,229.3 355,229.5 356,229.5 356,230.1 357,230.1 357,230.2 358,230.2 358,230.1 359,230.1 359,230.4 360,230.4 360,230.3 361,230.3 361,229.4 362,229.4 362,229.0 363,229.0 363,228.0 364,228.0 364,227.8 365,227.8 365,228.1 366,228.1 366,228.4 367,228.4 367,228.9 368,228.9 368,229.3 369,229.3 369,229.9 370,229.9 370,230.4 371,230.4 371,230.5 372,230.5 372,230.9 373,230.9 373,231.1 374,231.1 374,231.3 375,231.3 375,231.2 376,231.2 376,229.8 377,229.8 377,228.0 378,228.0 378,226.4 379,226.4 379,225.3 380,225.3 380,223.5 381,223.5 381,223.9 382,223.9 382,224.8 383,224.8 383,225.9 384,225.9 384,226.9 385,226.9 385,227.3 386,227.3 386,227.7 387,227.7 387,227.4 388,227.4 388,227.4 389,227.4 389,228.0 390,228.0 390,227.8 391,227.8 391,228.1 392,228.1 392,228.0 393,228.0 393,227.9 394,227.9 394,228.1 395,228.1 395,228.3 396,228.3 396,229.2 397,229.2 397,229.5 398,229.5 398,230.0 399,230.0 399,230.5 400,230.5 400,230.8 401,230.8 401,231.0 402,231.0 402,231.0 403,231.0 403,229.4 404,229.4 404,227.4 405,227.4 405,225.0 406,225.0 406,223.0 407,223.0 407,221.0 408,221.0 408,219.8 409,219.8 409,220.4 410,220.4 410,220.5 411,220.5 411,220.3 412,220.3 412,222.0 413,222.0 413,223.0 414,223.0 414,223.5 415,223.5 415,224.3 416,224.3 416,224.8 417,224.8 417,224.1 418,224.1 418,224.2 419,224.2 419,223.1 420,223.1 420,222.6 421,222.6 421,222.4 422,222.4 422,221.4 423,221.4 423,221.1 424,221.1 424,221.4 425,221.4 425,220.8 426,220.8 426,221.1 427,221.1 427,220.7 428,220.7 428,221.3 429,221.3 429,222.3 430,222.3 430,223.3 431,223.3 431,225.3 432,225.3 432,225.8 433,225.8 433,226.9 434,226.9 434,227.3 435,227.3 435,228.0 436,228.0 436,228.0 437,228.0 437,227.1 438,227.1 438,224.3 439,224.3 439,221.8 440,221.8 440,220.2 441,220.2 441,217.8 442,217.8 442,217.0 443,217.0 443,218.7 444,218.7 444,221.1 445,221.1 445,223.7 446,223.7 446,225.8 447,225.8 447,228.4 448,228.4 448,229.6 449,229.6 449,230.4 450,230.4 450,231.0 451,231.0 451,230.3 452,230.3 452,229.0 453,229.0 453,227.1 454,227.1 454,224.3 455,224.3 455,222.5 456,222.5 456,221.9 457,221.9 457,221.5 458,221.5 458,221.2 459,221.2 459,222.0 460,222.0 460,222.9 461,222.9 461,222.9 462,222.9 462,224.1 463,224.1 463,224.1 464,224.1 464,225.4 465,225.4 465,225.6 466,225.6 466,225.4 467,225.4 467,225.2 468,225.2 468,224.0 469,224.0 469,222.9 470,222.9 470,220.6 471,220.6 471,220.0 472,220.0 472,218.4 473,218.4 473,218.0 474,218.0 474,218.9 475,218.9 475,220.7 476,220.7 476,221.6 477,221.6 477,223.7 478,223.7 478,224.0 479,224.0 479,225.3 480,225.3 480,226.2 481,226.2 481,226.7 482,226.7 482,227.8 483,227.8 483,227.9 484,227.9 484,227.9 485,227.9 485,227.6 486,227.6 486,227.0 487,227.0 487,226.7 488,226.7 488,226.3 489,226.3 489,226.7 490,226.7 490,227.5 491,227.5 491,227.4 492,227.4 492,227.7 493,227.7 493,227.3 494,227.3 494,227.6 495,227.6 495,227.4 496,227.4 496,227.5 497,227.5 497,227.4 498,227.4 498,226.8 499,226.8 499,226.0 500,226.0 500,224.0 501,224.0 501,222.0 502,222.0 502,220.8 503,220.8 503,219.3 504,219.3 504,219.4 505,219.4 505,221.1 506,221.1 506,222.0 507,222.0 507,223.2 508,223.2 508,223.7 509,223.7 509,223.1 510,223.1 510,223.1 511,223.1 511,222.7 512,222.7 512,223.3 513,223.3 513,223.2 514,223.2 514,222.9 515,222.9 515,223.1 516,223.1 516,223.5 517,223.5 517,223.7 518,223.7 518,223.3 519,223.3 519,224.0 520,224.0 520,223.5 521,223.5 521,224.3 522,224.3 522,224.8 523,224.8 523,225.9 524,225.9 524,228.0 525,228.0 525,229.7 526,229.7 526,231.0 527,231.0 527,231.8 528,231.8 528,232.5 529,232.5 529,232.9 530,232.9 530,231.7 531,231.7 531,231.5 532,231.5 532,226.2 533,226.2 533,223.1 534,223.1 534,221.0 535,221.0 535,220.8 536,220.8 536,221.0 537,221.0 537,222.5 538,222.5 538,223.1 539,223.1 539,223.9 540,223.9 540,223.9 541,223.9 541,224.5 542,224.5 542,225.1 543,225.1 543,225.3 544,225.3 544,225.4 545,225.4 545,226.3 546,226.3 546,226.4 547,226.4 547,226.1 548,226.1 548,225.8 549,225.8 549,226.3 550,226.3 550,225.8 551,225.8 551,225.0 552,225.0 552,224.9 553,224.9 553,224.9 554,224.9 554,225.8 555,225.8 555,226.2 556,226.2 556,227.8 557,227.8 557,228.9 558,228.9 558,229.5 559,229.5 559,230.6 560,230.6 560,230.8 561,230.8 561,229.5 562,229.5 562,227.9 563,227.9 563,225.9 564,225.9 564,224.0 565,224.0 565,224.2 566,224.2 566,224.9 567,224.9 567,226.5 568,226.5 568,227.5 569,227.5 569,229.2 570,229.2 570,229.2 571,229.2 571,229.4 572,229.4 572,229.8 573,229.8 573,230.2 574,230.2 574,231.1 575,231.1 575,231.6 576,231.6 576,231.8 577,231.8 577,230.8 578,230.8 578,228.6 579,228.6 579,227.2 580,227.2 580,224.8 581,224.8 581,224.1 582,224.1 582,224.3 583,224.3 583,224.8 584,224.8 584,226.0 585,226.0 585,227.3 586,227.3 586,227.6 587,227.6 587,227.8 588,227.8 588,227.7 589,227.7 589,227.8 590,227.8 590,228.1 591,228.1 591,228.0 592,228.0 592,226.6 593,226.6 593,224.9 594,224.9 594,223.2 595,223.2 595,222.4 596,222.4 596,221.9 597,221.9 597,222.7 598,222.7 598,224.0 599,224.0 599,225.5 600,225.5 600,226.8 601,226.8 601,227.7 602,227.7 602,227.6 603,227.6 603,228.0 604,228.0 604,228.9 605,228.9 605,228.9 606,228.9 606,229.6 607,229.6 607,229.5 608,229.5 608,228.6 609,228.6 609,226.0 610,226.0 610,223.8 611,223.8 611,220.8 612,220.8 612,220.3 613,220.3 613,221.2 614,221.2 614,223.5 615,223.5 615,226.3 616,226.3 616,229.0 617,229.0 617,230.3 618,230.3 618,231.0 619,231.0 619,231.4 620,231.4 620,231.5 621,231.5 621,231.3 622,231.3 622,230.3 623,230.3 623,227.2 624,227.2 624,224.6 625,224.6 625,221.3 626,221.3 626,218.3 627,218.3 627,218.3 628,218.3 628,220.8 629,220.8 629,223.3 630,223.3 630,225.9 631,225.9 631,228.4 632,228.4 632,229.7 633,229.7 633,230.6 634,230.6 634,230.8 635,230.8 635,230.7 636,230.7 636,231.0 637,231.0 637,231.0 638,231.0 638,230.1 639,230.1 639,228.3 640,228.3 640,226.7 641,226.7 641,224.8 642,224.8 642,222.7 643,222.7 643,221.9 644,221.9 644,221.0 645,221.0 645,222.2 646,222.2 646,222.3 647,222.3 647,222.7 648,222.7 648,223.7 649,223.7 649,224.2 650,224.2 650,224.7 651,224.7 651,225.4 652,225.4 652,226.1 653,226.1 653,226.4 654,226.4 654,226.1 655,226.1 655,225.2 656,225.2 656,223.6 657,223.6 657,222.7 658,222.7 658,222.8 659,222.8 659,224.0 660,224.0 660,225.1 661,225.1 661,225.5 662,225.5 662,226.9 663,226.9 663,227.5 664,227.5 664,227.9 665,227.9 665,228.0 666,228.0 666,228.3 667,228.3 667,229.0 668,229.0 668,228.9 669,228.9 669,228.9 670,228.9 670,226.9 671,226.9 671,226.0 672,226.0 672,221.6 673,221.6 673,217.8 674,217.8 674,214.6 675,214.6 675,215.3 676,215.3 676,216.2 677,216.2 677,217.8 678,217.8 678,218.9 679,218.9 679,220.7 680,220.7 680,221.6 681,221.6 681,221.3 682,221.3 682,221.6 683,221.6 683,221.4 684,221.4 684,221.1 685,221.1 685,220.3 686,220.3 686,218.5 687,218.5 687,218.3 688,218.3 688,216.7 689,216.7 689,217.4 690,217.4 690,219.5 691,219.5 691,219.8 692,219.8 692,221.3 693,221.3 693,223.1 694,223.1 694,223.5 695,223.5 695,224.2 696,224.2 696,223.6 697,223.6 697,224.5 698,224.5 698,224.4 699,224.4 699,223.4 700,223.4 700,221.3 701,221.3 701,218.2 702,218.2 702,215.9 703,215.9 703,212.9 704,212.9 704,211.3 705,211.3 705,210.8 706,210.8 706,211.8 707,211.8 707,213.2 708,213.2 708,214.6 709,214.6 709,215.9 710,215.9 710,216.1 711,216.1 711,218.2 712,218.2 712,220.3 713,220.3 713,222.3 714,222.3 714,223.4 715,223.4 715,223.2 716,223.2 716,221.9 717,221.9 717,220.8 718,220.8 718,219.5 719,219.5 719,219.2 720,219.2 720,219.4 721,219.4 721,220.9 722,220.9 722,222.6 723,222.6 723,224.1 724,224.1 724,225.1 725,225.1 725,225.8 726,225.8 726,225.4 727,225.4 727,226.4 728,226.4 728,226.8 729,226.8 729,226.9 730,226.9 730,227.4 731,227.4 731,227.0 732,227.0 732,225.8 733,225.8 733,225.1 734,225.1 734,224.1 735,224.1 735,224.1 736,224.1 736,225.5 737,225.5 737,225.8 738,225.8 738,227.1 739,227.1 739,228.5 740,228.5 740,229.0 741,229.0 741,229.4 742,229.4 742,230.2 743,230.2 743,230.5 744,230.5 744,230.8 745,230.8 745,230.7 746,230.7 746,230.0 747,230.0 747,228.9 748,228.9 748,227.6 749,227.6 749,226.2 750,226.2 750,225.9 751,225.9 751,226.8 752,226.8 752,227.5 753,227.5 753,228.3 754,228.3 754,229.9 755,229.9 755,230.4 756,230.4 756,230.8 757,230.8 757,231.2 758,231.2 758,231.2 759,231.2 759,231.3 760,231.3 760,230.8 761,230.8 761,229.5 762,229.5 762,225.2 763,225.2 763,220.2 764,220.2 764,216.3 765,216.3 765,212.4 766,212.4 766,208.4 767,208.4 767,209.6 768,209.6 768,209.7 769,209.7 769,211.5 770,211.5 770,213.3 771,213.3 771,213.9 772,213.9 772,215.7 773,215.7 773,217.4 774,217.4 774,218.1 775,218.1 775,220.8 776,220.8 776,221.5 777,221.5 777,223.3 778,223.3 778,224.7 779,224.7 779,221.6 780,221.6 780,221.6 781,221.6 781,223.0 782,223.0 782,223.3 783,223.3 783,224.2 784,224.2 784,224.4 785,224.4 785,225.2 786,225.2 786,224.6 787,224.6 787,224.5 788,224.5 788,224.5 789,224.5 789,224.0 790,224.0 790,224.5 791,224.5 791,224.1 792,224.1 792,223.9 793,223.9 793,223.7 794,223.7 794,222.8 795,222.8 795,222.8 796,222.8 796,222.2 797,222.2 797,222.5 798,222.5 798,222.6 799,222.6 799,223.6 800,223.6 800,224.2 801,224.2 801,224.0 802,224.0 802,225.4 803,225.4 803,226.2 804,226.2 804,227.6 805,227.6 805,228.5 806,228.5 806,229.3 807,229.3 807,228.7 808,228.7 808,227.0 809,227.0 809,225.4 810,225.4 810,223.8 811,223.8 811,222.2 812,222.2 812,220.6 813,220.6 813,221.8 814,221.8 814,221.7 815,221.7 815,222.7 816,222.7 816,223.2 817,223.2 817,222.7 818,222.7 818,224.3 819,224.3 819,225.2 820,225.2 820,226.0 821,226.0 821,227.0 822,227.0 822,226.7 823,226.7 823,225.0 824,225.0 824,220.8 825,220.8 825,216.9 826,216.9 826,214.3 827,214.3 827,214.1 828,214.1 828,216.7 829,216.7 829,217.3 830,217.3 830,219.3 831,219.3 831,220.3 832,220.3 832,222.0 833,222.0 833,223.1 834,223.1 834,224.4 835,224.4 835,226.6 836,226.6 836,227.2 837,227.2 837,227.3 838,227.3 838,225.5 839,225.5 839,223.7 840,223.7 840,220.6 841,220.6 841,219.6 842,219.6 842,219.1 843,219.1 843,221.2 844,221.2 844,223.4 845,223.4 845,225.3 846,225.3 846,226.1 847,226.1 847,226.9 848,226.9 848,227.8 849,227.8 849,227.8 850,227.8 850,227.6 851,227.6 851,227.5 852,227.5 852,227.1 853,227.1 853,227.2 854,227.2 854,226.3 855,226.3 855,226.1 856,226.1 856,225.3 857,225.3 857,224.4 858,224.4 858,224.6 859,224.6 859,224.9 860,224.9 860,226.1 861,226.1 861,226.7 862,226.7 862,227.3 863,227.3 863,228.2 864,228.2 864,229.0 865,229.0 865,229.7 866,229.7 866,230.2 867,230.2 867,230.5 868,230.5 868,230.7 869,230.7 869,229.0 870,229.0 870,228.0 871,228.0 871,225.5 872,225.5 872,223.7 873,223.7 873,223.0 874,223.0 874,224.4 875,224.4 875,224.7 876,224.7 876,226.1 877,226.1 877,227.6 878,227.6 878,228.1 879,228.1 879,228.7 880,228.7 880,229.1 881,229.1 881,229.1 882,229.1 882,229.0 883,229.0 883,227.9 884,227.9 884,226.9 885,226.9 885,225.8 886,225.8 886,223.7 887,223.7 887,223.6 888,223.6 888,224.2 889,224.2 889,225.0 890,225.0 890,225.9 891,225.9 891,227.0 892,227.0 892,228.2 893,228.2 893,229.2 894,229.2 894,230.1 895,230.1 895,231.2 896,231.2 896,231.8 897,231.8 897,232.2 898,232.2 898,232.0 899,232.0 899,230.6 900,230.6 900,228.8 901,228.8 901,224.2 902,224.2 902,220.9 903,220.9 903,218.6 904,218.6 904,217.3 905,217.3 905,218.1 906,218.1 906,218.3 907,218.3 907,218.5 908,218.5 908,219.5 909,219.5 909,220.3 910,220.3 910,221.9 911,221.9 911,222.2 912,222.2 912,223.0 913,223.0 913,223.6 914,223.6 914,224.2 915,224.2 915,224.9 916,224.9 916,225.3 917,225.3 917,225.7 918,225.7 918,226.7 919,226.7 919,226.8 920,226.8 920,227.1 921,227.1 921,227.5 922,227.5 922,227.6 923,227.6 923,227.7 924,227.7 924,227.8 925,227.8 925,228.1 926,228.1 926,228.2 927,228.2 927,228.5 928,228.5 928,228.5 929,228.5 929,228.9 930,228.9 930,228.6 931,228.6 931,227.5 932,227.5 932,225.7 933,225.7 933,223.7 934,223.7 934,222.9 935,222.9 935,222.8 936,222.8 936,224.6 937,224.6 937,225.5 938,225.5 938,227.6 939,227.6 939,228.6 940,228.6 940,229.8 941,229.8 941,230.3 942,230.3 942,231.4 943,231.4 943,232.2 944,232.2 944,232.5 945,232.5 945,233.0 946,233.0 946,231.3 947,231.3 947,229.5 948,229.5 948,228.4 949,228.4 949,227.5 950,227.5 950,227.1 951,227.1 951,227.2 952,227.2 952,227.1 953,227.1 953,227.4 954,227.4 954,227.7 955,227.7 955,227.7 956,227.7 956,227.6 957,227.6 957,228.2 958,228.2 958,228.6 959,228.6 959,228.5 960,228.5 960,228.0 961,228.0 961,227.1 962,227.1 962,225.6 963,225.6 963,223.6 964,223.6 964,221.7 965,221.7 965,220.6 966,220.6 966,221.2 967,221.2 967,222.1 968,222.1 968,222.5 969,222.5 969,223.6 970,223.6 970,223.9 971,223.9 971,224.8 972,224.8 972,225.7 973,225.7 973,226.0 974,226.0 974,225.6 975,225.6 975,225.3 976,225.3 976,223.7 977,223.7 977,222.0 978,222.0 978,221.0 979,221.0 979,219.2 980,219.2 980,219.1 981,219.1 981,218.7 982,218.7 982,219.2 983,219.2 983,220.1 984,220.1 984,220.6 985,220.6 985,221.9 986,221.9 986,222.3 987,222.3 987,223.9 988,223.9 988,223.9 989,223.9 989,224.3 990,224.3 990,222.9 991,222.9 991,222.2 992,222.2 992,221.1 993,221.1 993,219.4 994,219.4 994,218.6 995,218.6 995,219.2 996,219.2 996,220.7 997,220.7 997,222.8 998,222.8 998,223.7 999,223.7 999,225.4 1000,225.4 1000,225.6 1001,225.6 1001,226.1 1002,226.1 1002,226.6 1003,226.6 1003,227.2 1004,227.2 1004,227.7 1005,227.7 1005,228.1 1006,228.1 1006,228.2 1007,228.2 1007,228.1 1008,228.1 1008,227.0 1009,227.0 1009,226.2 1010,226.2 1010,225.1 1011,225.1 1011,224.0 1012,224.0 1012,222.9 1013,222.9 1013,223.2 1014,223.2 1014,223.9 1015,223.9 1015,224.0 1016,224.0 1016,224.7 1017,224.7 1017,226.0 1018,226.0 1018,227.3 1019,227.3 1019,227.7 1020,227.7 1020,228.4 1021,228.4 1021,229.2 1022,229.2 1022,229.3 1023,229.3 1023,228.5 1024,228.5 1024,225.6 1025,225.6 1025,224.3 1026,224.3 1026,222.1 1027,222.1 1027,221.7 1028,221.7 1028,221.8 1029,221.8 1029,222.8 1030,222.8 1030,224.1 1031,224.1 1031,225.0 1032,225.0 1032,226.1 1033,226.1 1033,226.7 1034,226.7 1034,226.8 1035,226.8 1035,227.5 1036,227.5 1036,227.1 1037,227.1 1037,227.1 1038,227.1 1038,227.3 1039,227.3 1039,228.0 1040,228.0 1040,228.5 1041,228.5 1041,228.5 1042,228.5 1042,228.7 1043,228.7 1043,229.4 1044,229.4 1044,229.3 1045,229.3 1045,229.8 1046,229.8 1046,229.6 1047,229.6 1047,229.8 1048,229.8 1048,229.8 1049,229.8 1049,230.1 1050,230.1 1050,230.1 1051,230.1 1051,230.1 1052,230.1 1052,230.5 1053,230.5 1053,229.1 1054,229.1 1054,228.5 1055,228.5 1055,227.0 1056,227.0 1056,226.9 1057,226.9 1057,226.5 1058,226.5 1058,227.7 1059,227.7 1059,228.2 1060,228.2 1060,229.6 1061,229.6 1061,230.3 1062,230.3 1062,230.9 1063,230.9 1063,231.3 1064,231.3 1064,231.5 1065,231.5 1065,231.7 1066,231.7 1066,231.9 1067,231.9 1067,231.8 1068,231.8 1068,231.1 1069,231.1 1069,230.1 1070,230.1 1070,229.0 1071,229.0 1071,228.4 1072,228.4 1072,227.7 1073,227.7 1073,227.5 1074,227.5 1074,228.3 1075,228.3 1075,228.1 1076,228.1 1076,228.7 1077,228.7 1077,228.7 1078,228.7 1078,229.3 1079,229.3 1079,229.5 1080,229.5 1080,229.4 1081,229.4 1081,229.7 1082,229.7 1082,229.8 1083,229.8 1083,229.6 1084,229.6 1084,229.1 1085,229.1 1085,228.3 1086,228.3 1086,227.8 1087,227.8 1087,226.5 1088,226.5 1088,226.3 1089,226.3 1089,226.2 1090,226.2 1090,226.4 1091,226.4 1091,226.9 1092,226.9 1092,227.6 1093,227.6 1093,227.5 1094,227.5 1094,228.3 1095,228.3 1095,228.2 1096,228.2 1096,228.6 1097,228.6 1097,228.7 1098,228.7 1098,228.3 1099,228.3 1099,228.6 1100,228.6 1100,228.2 1101,228.2 1101,227.3 1102,227.3 1102,226.6 1103,226.6 1103,226.4 1104,226.4 1104,227.0 1105,227.0 1105,226.6 1106,226.6 1106,227.6 1107,227.6 1107,227.4 1108,227.4 1108,228.0 1109,228.0 1109,227.8 1110,227.8 1110,228.0 1111,228.0 1111,228.5 1112,228.5 1112,228.3 1113,228.3 1113,228.4 1114,228.4 1114,227.6 1115,227.6 1115,226.2 1116,226.2 1116,225.1 1117,225.1 1117,224.4 1118,224.4 1118,223.0 1119,223.0 1119,224.0 1120,224.0 1120,225.4 1121,225.4 1121,226.3 1122,226.3 1122,226.6 1123,226.6 1123,227.7 1124,227.7 1124,228.3 1125,228.3 1125,229.2 1126,229.2 1126,229.7 1127,229.7 1127,230.3 1128,230.3 1128,231.2 1129,231.2 1129,231.4 1130,231.4 1130,232.0 1131,232.0 1131,232.1 1132,232.1 1132,232.6 1133,232.6 1133,232.8 1134,232.8 1134,233.2 1135,233.2 1135,233.5 1136,233.5 1136,233.9 1137,233.9 1137,234.1 1138,234.1 1138,234.5 1139,234.5 1139,234.8 1140,234.8 1140,234.9 1141,234.9 1141,235.1 1142,235.1 1142,235.9 1141,235.9 1141,236.1 1140,236.1 1140,236.2 1139,236.2 1139,236.5 1138,236.5 1138,236.9 1137,236.9 1137,237.1 1136,237.1 1136,237.5 1135,237.5 1135,237.8 1134,237.8 1134,238.2 1133,238.2 1133,238.4 1132,238.4 1132,238.9 1131,238.9 1131,239.0 1130,239.0 1130,239.6 1129,239.6 1129,239.8 1128,239.8 1128,240.7 1127,240.7 1127,241.3 1126,241.3 1126,241.8 1125,241.8 1125,242.7 1124,242.7 1124,243.3 1123,243.3 1123,244.4 1122,244.4 1122,244.7 1121,244.7 1121,245.6 1120,245.6 1120,247.0 1119,247.0 1119,248.0 1118,248.0 1118,246.6 1117,246.6 1117,245.9 1116,245.9 1116,244.8 1115,244.8 1115,243.4 1114,243.4 1114,242.6 1113,242.6 1113,242.7 1112,242.7 1112,242.5 1111,242.5 1111,243.0 1110,243.0 1110,243.2 1109,243.2 1109,243.0 1108,243.0 1108,243.6 1107,243.6 1107,243.4 1106,243.4 1106,244.4 1105,244.4 1105,244.0 1104,244.0 1104,244.6 1103,244.6 1103,244.4 1102,244.4 1102,243.7 1101,243.7 1101,242.8 1100,242.8 1100,242.4 1099,242.4 1099,242.7 1098,242.7 1098,242.3 1097,242.3 1097,242.4 1096,242.4 1096,242.8 1095,242.8 1095,242.7 1094,242.7 1094,243.5 1093,243.5 1093,243.4 1092,243.4 1092,244.1 1091,244.1 1091,244.6 1090,244.6 1090,244.8 1089,244.8 1089,244.7 1088,244.7 1088,244.5 1087,244.5 1087,243.2 1086,243.2 1086,242.7 1085,242.7 1085,241.9 1084,241.9 1084,241.4 1083,241.4 1083,241.2 1082,241.2 1082,241.3 1081,241.3 1081,241.6 1080,241.6 1080,241.5 1079,241.5 1079,241.7 1078,241.7 1078,242.3 1077,242.3 1077,242.3 1076,242.3 1076,242.9 1075,242.9 1075,242.7 1074,242.7 1074,243.5 1073,243.5 1073,243.3 1072,243.3 1072,242.6 1071,242.6 1071,242.0 1070,242.0 1070,240.9 1069,240.9 1069,239.9 1068,239.9 1068,239.2 1067,239.2 1067,239.1 1066,239.1 1066,239.3 1065,239.3 1065,239.5 1064,239.5 1064,239.7 1063,239.7 1063,240.1 1062,240.1 1062,240.7 1061,240.7 1061,241.4 1060,241.4 1060,242.8 1059,242.8 1059,243.3 1058,243.3 1058,244.5 1057,244.5 1057,244.1 1056,244.1 1056,244.0 1055,244.0 1055,242.5 1054,242.5 1054,241.9 1053,241.9 1053,240.5 1052,240.5 1052,240.9 1051,240.9 1051,240.9 1050,240.9 1050,240.9 1049,240.9 1049,241.2 1048,241.2 1048,241.2 1047,241.2 1047,241.4 1046,241.4 1046,241.2 1045,241.2 1045,241.7 1044,241.7 1044,241.6 1043,241.6 1043,242.3 1042,242.3 1042,242.5 1041,242.5 1041,242.5 1040,242.5 1040,243.0 1039,243.0 1039,243.7 1038,243.7 1038,243.9 1037,243.9 1037,243.9 1036,243.9 1036,243.5 1035,243.5 1035,244.2 1034,244.2 1034,244.3 1033,244.3 1033,244.9 1032,244.9 1032,246.0 1031,246.0 1031,246.9 1030,246.9 1030,248.2 1029,248.2 1029,249.2 1028,249.2 1028,249.3 1027,249.3 1027,248.9 1026,248.9 1026,246.7 1025,246.7 1025,245.4 1024,245.4 1024,242.5 1023,242.5 1023,241.7 1022,241.7 1022,241.8 1021,241.8 1021,242.6 1020,242.6 1020,243.3 1019,243.3 1019,243.7 1018,243.7 1018,245.0 1017,245.0 1017,246.3 1016,246.3 1016,247.0 1015,247.0 1015,247.1 1014,247.1 1014,247.8 1013,247.8 1013,248.1 1012,248.1 1012,247.0 1011,247.0 1011,245.9 1010,245.9 1010,244.8 1009,244.8 1009,244.0 1008,244.0 1008,242.9 1007,242.9 1007,242.8 1006,242.8 1006,242.9 1005,242.9 1005,243.3 1004,243.3 1004,243.8 1003,243.8 1003,244.4 1002,244.4 1002,244.9 1001,244.9 1001,245.4 1000,245.4 1000,245.6 999,245.6 999,247.3 998,247.3 998,248.2 997,248.2 997,250.3 996,250.3 996,251.8 995,251.8 995,252.4 994,252.4 994,251.6 993,251.6 993,249.9 992,249.9 992,248.8 991,248.8 991,248.1 990,248.1 990,246.7 989,246.7 989,247.1 988,247.1 988,247.1 987,247.1 987,248.7 986,248.7 986,249.1 985,249.1 985,250.4 984,250.4 984,250.9 983,250.9 983,251.8 982,251.8 982,252.3 981,252.3 981,251.9 980,251.9 980,251.8 979,251.8 979,250.0 978,250.0 978,249.0 977,249.0 977,247.3 976,247.3 976,245.7 975,245.7 975,245.4 974,245.4 974,245.0 973,245.0 973,245.3 972,245.3 972,246.2 971,246.2 971,247.1 970,247.1 970,247.4 969,247.4 969,248.5 968,248.5 968,248.9 967,248.9 967,249.8 966,249.8 966,250.4 965,250.4 965,249.3 964,249.3 964,247.4 963,247.4 963,245.4 962,245.4 962,243.9 961,243.9 961,243.0 960,243.0 960,242.5 959,242.5 959,242.4 958,242.4 958,242.8 957,242.8 957,243.4 956,243.4 956,243.3 955,243.3 955,243.3 954,243.3 954,243.6 953,243.6 953,243.9 952,243.9 952,243.8 951,243.8 951,243.9 950,243.9 950,243.5 949,243.5 949,242.6 948,242.6 948,241.5 947,241.5 947,239.7 946,239.7 946,238.0 945,238.0 945,238.5 944,238.5 944,238.8 943,238.8 943,239.6 942,239.6 942,240.7 941,240.7 941,241.2 940,241.2 940,242.4 939,242.4 939,243.4 938,243.4 938,245.5 937,245.5 937,246.4 936,246.4 936,248.2 935,248.2 935,248.1 934,248.1 934,247.3 933,247.3 933,245.3 932,245.3 932,243.5 931,243.5 931,242.4 930,242.4 930,242.1 929,242.1 929,242.5 928,242.5 928,242.5 927,242.5 927,242.8 926,242.8 926,242.9 925,242.9 925,243.2 924,243.2 924,243.3 923,243.3 923,243.4 922,243.4 922,243.5 921,243.5 921,243.9 920,243.9 920,244.2 919,244.2 919,244.3 918,244.3 918,245.3 917,245.3 917,245.7 916,245.7 916,246.1 915,246.1 915,246.8 914,246.8 914,247.4 913,247.4 913,248.0 912,248.0 912,248.8 911,248.8 911,249.1 910,249.1 910,250.7 909,250.7 909,251.5 908,251.5 908,252.5 907,252.5 907,252.7 906,252.7 906,252.9 905,252.9 905,253.7 904,253.7 904,252.4 903,252.4 903,250.1 902,250.1 902,246.8 901,246.8 901,242.2 900,242.2 900,240.4 899,240.4 899,239.0 898,239.0 898,238.8 897,238.8 897,239.2 896,239.2 896,239.8 895,239.8 895,240.9 894,240.9 894,241.8 893,241.8 893,242.8 892,242.8 892,244.0 891,244.0 891,245.1 890,245.1 890,246.0 889,246.0 889,246.8 888,246.8 888,247.4 887,247.4 887,247.3 886,247.3 886,245.2 885,245.2 885,244.1 884,244.1 884,243.1 883,243.1 883,242.0 882,242.0 882,241.9 881,241.9 881,241.9 880,241.9 880,242.3 879,242.3 879,242.9 878,242.9 878,243.4 877,243.4 877,244.9 876,244.9 876,246.3 875,246.3 875,246.6 874,246.6 874,248.0 873,248.0 873,247.3 872,247.3 872,245.5 871,245.5 871,243.0 870,243.0 870,242.0 869,242.0 869,240.3 868,240.3 868,240.5 867,240.5 867,240.8 866,240.8 866,241.3 865,241.3 865,242.0 864,242.0 864,242.8 863,242.8 863,243.7 862,243.7 862,244.3 861,244.3 861,244.9 860,244.9 860,246.1 859,246.1 859,246.4 858,246.4 858,246.6 857,246.6 857,245.7 856,245.7 856,244.9 855,244.9 855,244.7 854,244.7 854,243.8 853,243.8 853,243.9 852,243.9 852,243.5 851,243.5 851,243.4 850,243.4 850,243.2 849,243.2 849,243.2 848,243.2 848,244.1 847,244.1 847,244.9 846,244.9 846,245.7 845,245.7 845,247.6 844,247.6 844,249.8 843,249.8 843,251.9 842,251.9 842,251.4 841,251.4 841,250.4 840,250.4 840,247.3 839,247.3 839,245.5 838,245.5 838,243.7 837,243.7 837,243.8 836,243.8 836,244.4 835,244.4 835,246.6 834,246.6 834,247.9 833,247.9 833,249.0 832,249.0 832,250.7 831,250.7 831,251.7 830,251.7 830,253.7 829,253.7 829,254.3 828,254.3 828,256.9 827,256.9 827,256.7 826,256.7 826,254.1 825,254.1 825,250.2 824,250.2 824,246.0 823,246.0 823,244.3 822,244.3 822,244.0 821,244.0 821,245.0 820,245.0 820,245.8 819,245.8 819,246.7 818,246.7 818,248.3 817,248.3 817,247.8 816,247.8 816,248.3 815,248.3 815,249.3 814,249.3 814,249.2 813,249.2 813,250.4 812,250.4 812,248.8 811,248.8 811,247.2 810,247.2 810,245.6 809,245.6 809,244.0 808,244.0 808,242.3 807,242.3 807,241.7 806,241.7 806,242.5 805,242.5 805,243.4 804,243.4 804,244.8 803,244.8 803,245.6 802,245.6 802,247.0 801,247.0 801,246.8 800,246.8 800,247.4 799,247.4 799,248.4 798,248.4 798,248.5 797,248.5 797,248.8 796,248.8 796,248.2 795,248.2 795,248.2 794,248.2 794,247.3 793,247.3 793,247.1 792,247.1 792,246.9 791,246.9 791,246.5 790,246.5 790,247.0 789,247.0 789,246.5 788,246.5 788,246.5 787,246.5 787,246.4 786,246.4 786,245.8 785,245.8 785,246.6 784,246.6 784,246.8 783,246.8 783,247.7 782,247.7 782,248.0 781,248.0 781,249.4 780,249.4 780,249.4 779,249.4 779,246.3 778,246.3 778,247.7 777,247.7 777,249.5 776,249.5 776,250.2 775,250.2 775,252.9 774,252.9 774,253.6 773,253.6 773,255.3 772,255.3 772,257.1 771,257.1 771,257.7 770,257.7 770,259.5 769,259.5 769,261.3 768,261.3 768,261.4 767,261.4 767,262.6 766,262.6 766,258.6 765,258.6 765,254.7 764,254.7 764,250.8 763,250.8 763,245.8 762,245.8 762,241.5 761,241.5 761,240.2 760,240.2 760,239.7 759,239.7 759,239.8 758,239.8 758,239.8 757,239.8 757,240.2 756,240.2 756,240.6 755,240.6 755,241.1 754,241.1 754,242.7 753,242.7 753,243.5 752,243.5 752,244.2 751,244.2 751,245.1 750,245.1 750,244.8 749,244.8 749,243.4 748,243.4 748,242.1 747,242.1 747,241.0 746,241.0 746,240.3 745,240.3 745,240.2 744,240.2 744,240.5 743,240.5 743,240.8 742,240.8 742,241.6 741,241.6 741,242.0 740,242.0 740,242.5 739,242.5 739,243.9 738,243.9 738,245.2 737,245.2 737,245.5 736,245.5 736,246.9 735,246.9 735,246.9 734,246.9 734,245.9 733,245.9 733,245.2 732,245.2 732,244.0 731,244.0 731,243.6 730,243.6 730,244.1 729,244.1 729,244.2 728,244.2 728,244.6 727,244.6 727,245.6 726,245.6 726,245.2 725,245.2 725,245.9 724,245.9 724,246.9 723,246.9 723,248.4 722,248.4 722,250.1 721,250.1 721,251.6 720,251.6 720,251.8 719,251.8 719,251.5 718,251.5 718,250.2 717,250.2 717,249.1 716,249.1 716,247.8 715,247.8 715,247.6 714,247.6 714,248.7 713,248.7 713,250.7 712,250.7 712,252.8 711,252.8 711,254.9 710,254.9 710,255.1 709,255.1 709,256.4 708,256.4 708,257.8 707,257.8 707,259.2 706,259.2 706,260.2 705,260.2 705,259.7 704,259.7 704,258.1 703,258.1 703,255.1 702,255.1 702,252.8 701,252.8 701,249.7 700,249.7 700,247.6 699,247.6 699,246.6 698,246.6 698,246.5 697,246.5 697,247.4 696,247.4 696,246.8 695,246.8 695,247.5 694,247.5 694,247.9 693,247.9 693,249.7 692,249.7 692,251.2 691,251.2 691,251.5 690,251.5 690,253.6 689,253.6 689,254.3 688,254.3 688,252.7 687,252.7 687,252.5 686,252.5 686,250.7 685,250.7 685,249.9 684,249.9 684,249.6 683,249.6 683,249.4 682,249.4 682,249.7 681,249.7 681,249.4 680,249.4 680,250.3 679,250.3 679,252.1 678,252.1 678,253.2 677,253.2 677,254.8 676,254.8 676,255.7 675,255.7 675,256.4 674,256.4 674,253.2 673,253.2 673,249.4 672,249.4 672,245.0 671,245.0 671,244.1 670,244.1 670,242.1 669,242.1 669,242.1 668,242.1 668,242.0 667,242.0 667,242.7 666,242.7 666,243.0 665,243.0 665,243.1 664,243.1 664,243.5 663,243.5 663,244.1 662,244.1 662,245.5 661,245.5 661,245.9 660,245.9 660,247.0 659,247.0 659,248.2 658,248.2 658,248.3 657,248.3 657,247.4 656,247.4 656,245.8 655,245.8 655,244.9 654,244.9 654,244.6 653,244.6 653,244.9 652,244.9 652,245.6 651,245.6 651,246.3 650,246.3 650,246.8 649,246.8 649,247.3 648,247.3 648,248.3 647,248.3 647,248.7 646,248.7 646,248.8 645,248.8 645,250.0 644,250.0 644,249.1 643,249.1 643,248.3 642,248.3 642,246.2 641,246.2 641,244.3 640,244.3 640,242.7 639,242.7 639,240.9 638,240.9 638,240.0 637,240.0 637,240.0 636,240.0 636,240.3 635,240.3 635,240.2 634,240.2 634,240.4 633,240.4 633,241.3 632,241.3 632,242.6 631,242.6 631,245.1 630,245.1 630,247.7 629,247.7 629,250.2 628,250.2 628,252.7 627,252.7 627,252.7 626,252.7 626,249.7 625,249.7 625,246.4 624,246.4 624,243.8 623,243.8 623,240.7 622,240.7 622,239.7 621,239.7 621,239.5 620,239.5 620,239.6 619,239.6 619,240.0 618,240.0 618,240.7 617,240.7 617,242.0 616,242.0 616,244.7 615,244.7 615,247.5 614,247.5 614,249.8 613,249.8 613,250.7 612,250.7 612,250.2 611,250.2 611,247.2 610,247.2 610,245.0 609,245.0 609,242.4 608,242.4 608,241.5 607,241.5 607,241.4 606,241.4 606,242.1 605,242.1 605,242.1 604,242.1 604,243.0 603,243.0 603,243.4 602,243.4 602,243.3 601,243.3 601,244.2 600,244.2 600,245.5 599,245.5 599,247.0 598,247.0 598,248.3 597,248.3 597,249.1 596,249.1 596,248.6 595,248.6 595,247.8 594,247.8 594,246.1 593,246.1 593,244.4 592,244.4 592,243.0 591,243.0 591,242.9 590,242.9 590,243.2 589,243.2 589,243.3 588,243.3 588,243.2 587,243.2 587,243.4 586,243.4 586,243.7 585,243.7 585,245.0 584,245.0 584,246.2 583,246.2 583,246.7 582,246.7 582,246.9 581,246.9 581,246.2 580,246.2 580,243.8 579,243.8 579,242.4 578,242.4 578,240.2 577,240.2 577,239.2 576,239.2 576,239.4 575,239.4 575,239.9 574,239.9 574,240.8 573,240.8 573,241.2 572,241.2 572,241.6 571,241.6 571,241.8 570,241.8 570,241.8 569,241.8 569,243.5 568,243.5 568,244.5 567,244.5 567,246.1 566,246.1 566,246.8 565,246.8 565,247.0 564,247.0 564,245.1 563,245.1 563,243.1 562,243.1 562,241.5 561,241.5 561,240.2 560,240.2 560,240.4 559,240.4 559,241.5 558,241.5 558,242.1 557,242.1 557,243.2 556,243.2 556,244.8 555,244.8 555,245.2 554,245.2 554,246.1 553,246.1 553,246.1 552,246.1 552,246.0 551,246.0 551,245.2 550,245.2 550,244.7 549,244.7 549,245.2 548,245.2 548,244.9 547,244.9 547,244.6 546,244.6 546,244.7 545,244.7 545,245.6 544,245.6 544,245.7 543,245.7 543,245.9 542,245.9 542,246.5 541,246.5 541,247.1 540,247.1 540,247.1 539,247.1 539,247.9 538,247.9 538,248.5 537,248.5 537,250.0 536,250.0 536,250.2 535,250.2 535,250.0 534,250.0 534,247.9 533,247.9 533,244.8 532,244.8 532,239.5 531,239.5 531,239.3 530,239.3 530,238.1 529,238.1 529,238.5 528,238.5 528,239.2 527,239.2 527,240.0 526,240.0 526,241.3 525,241.3 525,243.0 524,243.0 524,245.1 523,245.1 523,246.2 522,246.2 522,246.7 521,246.7 521,247.5 520,247.5 520,247.0 519,247.0 519,247.7 518,247.7 518,247.3 517,247.3 517,247.5 516,247.5 516,247.9 515,247.9 515,248.1 514,248.1 514,247.8 513,247.8 513,247.7 512,247.7 512,248.3 511,248.3 511,247.9 510,247.9 510,247.9 509,247.9 509,247.3 508,247.3 508,247.8 507,247.8 507,249.0 506,249.0 506,249.9 505,249.9 505,251.6 504,251.6 504,251.7 503,251.7 503,250.2 502,250.2 502,249.0 501,249.0 501,247.0 500,247.0 500,245.0 499,245.0 499,244.2 498,244.2 498,243.6 497,243.6 497,243.5 496,243.5 496,243.6 495,243.6 495,243.4 494,243.4 494,243.7 493,243.7 493,243.3 492,243.3 492,243.6 491,243.6 491,243.5 490,243.5 490,244.3 489,244.3 489,244.7 488,244.7 488,244.3 487,244.3 487,244.0 486,244.0 486,243.4 485,243.4 485,243.1 484,243.1 484,243.1 483,243.1 483,243.2 482,243.2 482,244.3 481,244.3 481,244.8 480,244.8 480,245.7 479,245.7 479,247.0 478,247.0 478,247.3 477,247.3 477,249.4 476,249.4 476,250.3 475,250.3 475,252.1 474,252.1 474,253.0 473,253.0 473,252.6 472,252.6 472,251.0 471,251.0 471,250.4 470,250.4 470,248.1 469,248.1 469,247.0 468,247.0 468,245.8 467,245.8 467,245.6 466,245.6 466,245.4 465,245.4 465,245.6 464,245.6 464,246.9 463,246.9 463,246.9 462,246.9 462,248.1 461,248.1 461,248.1 460,248.1 460,249.0 459,249.0 459,249.8 458,249.8 458,249.5 457,249.5 457,249.1 456,249.1 456,248.5 455,248.5 455,246.7 454,246.7 454,243.9 453,243.9 453,242.0 452,242.0 452,240.7 451,240.7 451,240.0 450,240.0 450,240.6 449,240.6 449,241.4 448,241.4 448,242.6 447,242.6 447,245.2 446,245.2 446,247.3 445,247.3 445,249.9 444,249.9 444,252.3 443,252.3 443,254.0 442,254.0 442,253.2 441,253.2 441,250.8 440,250.8 440,249.2 439,249.2 439,246.7 438,246.7 438,243.9 437,243.9 437,243.0 436,243.0 436,243.0 435,243.0 435,243.7 434,243.7 434,244.1 433,244.1 433,245.2 432,245.2 432,245.7 431,245.7 431,247.7 430,247.7 430,248.7 429,248.7 429,249.7 428,249.7 428,250.3 427,250.3 427,249.9 426,249.9 426,250.2 425,250.2 425,249.6 424,249.6 424,249.9 423,249.9 423,249.6 422,249.6 422,248.6 421,248.6 421,248.4 420,248.4 420,247.9 419,247.9 419,246.8 418,246.8 418,246.9 417,246.9 417,246.2 416,246.2 416,246.7 415,246.7 415,247.5 414,247.5 414,248.0 413,248.0 413,249.0 412,249.0 412,250.7 411,250.7 411,250.5 410,250.5 410,250.6 409,250.6 409,251.2 408,251.2 408,250.0 407,250.0 407,248.0 406,248.0 406,246.0 405,246.0 405,243.6 404,243.6 404,241.6 403,241.6 403,240.0 402,240.0 402,240.0 401,240.0 401,240.2 400,240.2 400,240.5 399,240.5 399,241.0 398,241.0 398,241.5 397,241.5 397,241.8 396,241.8 396,242.7 395,242.7 395,242.9 394,242.9 394,243.1 393,243.1 393,243.0 392,243.0 392,242.9 391,242.9 391,243.2 390,243.2 390,243.0 389,243.0 389,243.6 388,243.6 388,243.6 387,243.6 387,243.3 386,243.3 386,243.7 385,243.7 385,244.1 384,244.1 384,245.1 383,245.1 383,246.2 382,246.2 382,247.1 381,247.1 381,247.5 380,247.5 380,245.7 379,245.7 379,244.6 378,244.6 378,243.0 377,243.0 377,241.2 376,241.2 376,239.8 375,239.8 375,239.7 374,239.7 374,239.9 373,239.9 373,240.1 372,240.1 372,240.5 371,240.5 371,240.6 370,240.6 370,241.1 369,241.1 369,241.7 368,241.7 368,242.1 367,242.1 367,242.6 366,242.6 366,242.9 365,242.9 365,243.2 364,243.2 364,243.0 363,243.0 363,242.0 362,242.0 362,241.6 361,241.6 361,240.7 360,240.7 360,240.6 359,240.6 359,240.9 358,240.9 358,240.8 357,240.8 357,240.9 356,240.9 356,241.5 355,241.5 355,241.7 354,241.7 354,242.4 353,242.4 353,244.4 352,244.4 352,246.1 351,246.1 351,247.5 350,247.5 350,249.0 349,249.0 349,249.2 348,249.2 348,247.8 347,247.8 347,245.7 346,245.7 346,243.5 345,243.5 345,241.7 344,241.7 344,241.2 343,241.2 343,241.3 342,241.3 342,241.8 341,241.8 341,243.2 340,243.2 340,244.2 339,244.2 339,245.6 338,245.6 338,246.9 337,246.9 337,249.1 336,249.1 336,250.4 335,250.4 335,250.4 334,250.4 334,251.1 333,251.1 333,251.0 332,251.0 332,249.5 331,249.5 331,249.2 330,249.2 330,248.6 329,248.6 329,247.7 328,247.7 328,246.8 327,246.8 327,246.7 326,246.7 326,246.8 325,246.8 325,246.9 324,246.9 324,247.3 323,247.3 323,247.9 322,247.9 322,249.1 321,249.1 321,249.5 320,249.5 320,250.2 319,250.2 319,250.0 318,250.0 318,249.3 317,249.3 317,247.1 316,247.1 316,245.3 315,245.3 315,243.3 314,243.3 314,241.7 313,241.7 313,241.9 312,241.9 312,242.5 311,242.5 311,242.9 310,242.9 310,244.1 309,244.1 309,244.8 308,244.8 308,245.3 307,245.3 307,246.3 306,246.3 306,246.5 305,246.5 305,247.2 304,247.2 304,247.2 303,247.2 303,246.2 302,246.2 302,246.4 301,246.4 301,246.4 300,246.4 300,245.6 299,245.6 299,245.7 298,245.7 298,245.9 297,245.9 297,246.6 296,246.6 296,246.4 295,246.4 295,247.6 294,247.6 294,247.8 293,247.8 293,248.4 292,248.4 292,249.7 291,249.7 291,250.2 290,250.2 290,250.9 289,250.9 289,249.5 288,249.5 288,247.6 287,247.6 287,245.3 286,245.3 286,243.4 285,243.4 285,241.7 284,241.7 284,241.3 283,241.3 283,241.5 282,241.5 282,241.9 281,241.9 281,242.5 280,242.5 280,242.9 279,242.9 279,243.8 278,243.8 278,244.6 277,244.6 277,245.6 276,245.6 276,246.3 275,246.3 275,246.8 274,246.8 274,247.4 273,247.4 273,247.9 272,247.9 272,247.6 271,247.6 271,246.9 270,246.9 270,247.2 269,247.2 269,246.9 268,246.9 268,246.8 267,246.8 267,247.7 266,247.7 266,247.1 265,247.1 265,248.2 264,248.2 264,247.8 263,247.8 263,248.5 262,248.5 262,249.1 261,249.1 261,250.0 260,250.0 260,250.2 259,250.2 259,249.7 258,249.7 258,247.9 257,247.9 257,245.9 256,245.9 256,243.4 255,243.4 255,241.2 254,241.2 254,240.1 253,240.1 253,240.1 252,240.1 252,240.6 251,240.6 251,241.0 250,241.0 250,241.8 249,241.8 249,242.1 248,242.1 248,242.7 247,242.7 247,244.0 246,244.0 246,244.8 245,244.8 245,244.9 244,244.9 244,245.5 243,245.5 243,245.7 242,245.7 242,245.9 241,245.9 241,245.5 240,245.5 240,245.2 239,245.2 239,246.3 238,246.3 238,247.1 237,247.1 237,247.5 236,247.5 236,249.1 235,249.1 235,249.2 234,249.2 234,250.7 233,250.7 233,251.0 232,251.0 232,251.8 231,251.8 231,253.5 230,253.5 230,254.3 229,254.3 229,256.7 228,256.7 228,258.8 227,258.8 227,258.0 226,258.0 226,256.8 225,256.8 225,253.9 224,253.9 224,250.9 223,250.9 223,247.0 222,247.0 222,243.9 221,243.9 221,241.9 220,241.9 220,240.7 219,240.7 219,240.4 218,240.4 218,240.5 217,240.5 217,240.6 216,240.6 216,241.3 215,241.3 215,242.2 214,242.2 214,244.2 213,244.2 213,246.1 212,246.1 212,247.7 211,247.7 211,249.7 210,249.7 210,250.3 209,250.3 209,248.5 208,248.5 208,246.5 207,246.5 207,244.4 206,244.4 206,242.5 205,242.5 205,241.7 204,241.7 204,241.9 203,241.9 203,242.5 202,242.5 202,243.1 201,243.1 201,244.5 200,244.5 200,246.2 199,246.2 199,247.7 198,247.7 198,249.5 197,249.5 197,251.9 196,251.9 196,254.2 195,254.2 195,253.4 194,253.4 194,252.9 193,252.9 193,250.8 192,250.8 192,247.6 191,247.6 191,245.7 190,245.7 190,244.3 189,244.3 189,243.8 188,243.8 188,243.5 187,243.5 187,243.8 186,243.8 186,244.8 185,244.8 185,246.0 184,246.0 184,246.7 183,246.7 183,248.4 182,248.4 182,249.1 181,249.1 181,251.1 180,251.1 180,251.0 179,251.0 179,251.8 178,251.8 178,251.9 177,251.9 177,251.8 176,251.8 176,250.7 175,250.7 175,250.2 174,250.2 174,249.2 173,249.2 173,249.8 172,249.8 172,249.8 171,249.8 171,249.6 170,249.6 170,250.3 169,250.3 169,251.9 168,251.9 168,253.1 167,253.1 167,255.6 166,255.6 166,257.2 165,257.2 165,259.3 164,259.3 164,259.9 163,259.9 163,257.9 162,257.9 162,255.7 161,255.7 161,253.7 160,253.7 160,251.4 159,251.4 159,248.3 158,248.3 158,246.6 157,246.6 157,245.8 156,245.8 156,245.5 155,245.5"/>
</svg>
<div class="abs" style="left:1148px;top:137px;width:18px;height:470px;background:#f0f0f0;"></div>
<div class="abs" style="left:1156px;top:153px;width:2px;height:436px;background:#8a8a8a;border-radius:1px"></div>
<div class="abs" style="left:0px;top:607px;width:1166px;height:17px;background:#f0f0f0;"></div>
<div class="abs" style="left:154px;top:615px;width:782px;height:2px;background:#8a8a8a;border-radius:1px"></div>
<div class="abs" style="left:0px;top:624px;width:1166px;height:58px;background:#f8f9fe;border-top:1px solid #c4c4c8;border-bottom:1px solid #c4c4c8"></div>
<div class="grab" style="left:4px;top:630px;height:47px"></div>
<div class="abs" style="left:11px;top:625px;width:1px;height:56px;background:#dcdce0;"></div>
<div class="abs t sim" style="left:18.53px;top:631px;font-kerning:none;letter-spacing:1.061px;font-size:12px;line-height:14px">Project Rate (Hz)</div>
<div class="abs t sim" style="left:132.35px;top:631px;font-kerning:none;letter-spacing:0.096px;font-size:12px;line-height:14px">Snap-To</div>
<div class="abs" style="left:126px;top:631px;width:1px;height:15px;background:#888;"></div>
<div class="abs" style="left:126px;top:658px;width:1px;height:15px;background:#888;"></div>
<div class="abs" style="left:213px;top:631px;width:1px;height:15px;background:#888;"></div>
<div class="abs" style="left:213px;top:658px;width:1px;height:15px;background:#888;"></div>
<div class="abs" style="left:18px;top:653px;width:102px;height:25px;background:#fff;border:1px solid #8c8c8c;border-bottom-color:#7c7c7c;border-radius:3px"></div><div class="abs t " style="left:23px;top:657.5px;font-size:13px;line-height:16px">16000</div><svg class="abs" style="left:104px;top:662px" width="10" height="6" viewBox="0 0 10 6"><path d="M0.8 0.8L5 5L9.2 0.8" fill="none" stroke="#444" stroke-width="1"/></svg>
<div class="abs" style="left:133px;top:653px;width:74px;height:25px;background:#fff;border:1px solid #d4d4d4;border-bottom-color:#7c7c7c;border-radius:3px"></div><div class="abs t " style="left:138px;top:657.5px;font-size:13px;line-height:16px">Off</div><svg class="abs" style="left:191px;top:662px" width="10" height="6" viewBox="0 0 10 6"><path d="M0.8 0.8L5 5L9.2 0.8" fill="none" stroke="#444" stroke-width="1"/></svg>
<div class="abs" style="left:220px;top:626px;width:354px;height:24px;background:#fff;border:1px solid #dcdcdc;border-radius:3px"></div>
<div class="abs t " style="left:224px;top:630px;font-size:13px;line-height:16px">Start and End of Selection</div>
<svg class="abs" style="left:559px;top:635px" width="10" height="6" viewBox="0 0 10 6"><path d="M0.8 0.8L5 5L9.2 0.8" fill="none" stroke="#444" stroke-width="1"/></svg>
<div class="abs" style="left:220px;top:653px;width:174px;height:21px;background:#b5b9c6;border-top:2px solid #7c7c80;border-left:2px solid #7c7c80;border-bottom:1px solid #e4e4e8;border-right:1px solid #e4e4e8"></div>
<div class="abs" style="left:223px;top:655px;width:22px;height:18px;background:#cdcfd6;"></div>
<div class="abs" style="left:268.6px;top:655px;width:22.2px;height:18px;background:#cdcfd6;"></div>
<div class="abs" style="left:314.6px;top:655px;width:22.4px;height:18px;background:#cdcfd6;"></div>
<div class="abs" style="left:344.8px;top:655px;width:22.2px;height:18px;background:#cdcfd6;"></div>
<div class="abs" style="left:383.5px;top:655px;width:1px;height:18px;background:#eceef2;"></div>
<div class="abs t sim" style="left:223px;top:657px;width:11px;text-align:center;font-size:15px;line-height:16px;color:#0000d0">0</div>
<div class="abs t sim" style="left:234px;top:657px;width:11px;text-align:center;font-size:15px;line-height:16px;color:#0000d0">0</div>
<div class="abs t sim" style="left:268.6px;top:657px;width:11px;text-align:center;font-size:15px;line-height:16px;color:#0000d0">0</div>
<div class="abs t sim" style="left:279.6px;top:657px;width:11px;text-align:center;font-size:15px;line-height:16px;color:#0000d0">0</div>
<div class="abs t sim" style="left:314.6px;top:657px;width:11px;text-align:center;font-size:15px;line-height:16px;color:#0000d0">0</div>
<div class="abs t sim" style="left:325.6px;top:657px;width:11px;text-align:center;font-size:15px;line-height:16px;color:#0000d0">0</div>
<div class="abs t sim" style="left:344.8px;top:657px;width:11px;text-align:center;font-size:15px;line-height:16px;color:#0000d0">0</div>
<div class="abs t sim" style="left:355.8px;top:657px;width:11px;text-align:center;font-size:15px;line-height:16px;color:#0000d0">0</div>
<div class="abs t sim" style="left:251.5px;top:657px;width:11px;text-align:center;font-size:15px;line-height:16px;color:#0000d0">h</div>
<div class="abs t sim" style="left:297px;top:657px;width:11px;text-align:center;font-size:15px;line-height:16px;color:#0000d0;transform:scaleX(0.68)">m</div>
<div class="abs t sim" style="left:334.2px;top:657px;width:11px;text-align:center;font-size:15px;line-height:16px;color:#0000d0;font-weight:bold">.</div>
<div class="abs t sim" style="left:373px;top:657px;width:11px;text-align:center;font-size:15px;line-height:16px;color:#0000d0">s</div>
<svg class="abs" style="left:384px;top:660px" width="9" height="6" viewBox="0 0 9 6"><path d="M0.6 0.5H8.6L4.6 5.2z" fill="#000"/></svg>
<div class="abs" style="left:400px;top:653px;width:174px;height:21px;background:#b5b9c6;border-top:2px solid #7c7c80;border-left:2px solid #7c7c80;border-bottom:1px solid #e4e4e8;border-right:1px solid #e4e4e8"></div>
<div class="abs" style="left:403px;top:655px;width:22px;height:18px;background:#cdcfd6;"></div>
<div class="abs" style="left:448.6px;top:655px;width:22.2px;height:18px;background:#cdcfd6;"></div>
<div class="abs" style="left:494.6px;top:655px;width:22.4px;height:18px;background:#cdcfd6;"></div>
<div class="abs" style="left:524.8px;top:655px;width:22.2px;height:18px;background:#cdcfd6;"></div>
<div class="abs" style="left:563.5px;top:655px;width:1px;height:18px;background:#eceef2;"></div>
<div class="abs t sim" style="left:403px;top:657px;width:11px;text-align:center;font-size:15px;line-height:16px;color:#0000d0">0</div>
<div class="abs t sim" style="left:414px;top:657px;width:11px;text-align:center;font-size:15px;line-height:16px;color:#0000d0">0</div>
<div class="abs t sim" style="left:448.6px;top:657px;width:11px;text-align:center;font-size:15px;line-height:16px;color:#0000d0">0</div>
<div class="abs t sim" style="left:459.6px;top:657px;width:11px;text-align:center;font-size:15px;line-height:16px;color:#0000d0">0</div>
<div class="abs t sim" style="left:494.6px;top:657px;width:11px;text-align:center;font-size:15px;line-height:16px;color:#0000d0">0</div>
<div class="abs t sim" style="left:505.6px;top:657px;width:11px;text-align:center;font-size:15px;line-height:16px;color:#0000d0">0</div>
<div class="abs t sim" style="left:524.8px;top:657px;width:11px;text-align:center;font-size:15px;line-height:16px;color:#0000d0">0</div>
<div class="abs t sim" style="left:535.8px;top:657px;width:11px;text-align:center;font-size:15px;line-height:16px;color:#0000d0">0</div>
<div class="abs t sim" style="left:431.5px;top:657px;width:11px;text-align:center;font-size:15px;line-height:16px;color:#0000d0">h</div>
<div class="abs t sim" style="left:477px;top:657px;width:11px;text-align:center;font-size:15px;line-height:16px;color:#0000d0;transform:scaleX(0.68)">m</div>
<div class="abs t sim" style="left:514.2px;top:657px;width:11px;text-align:center;font-size:15px;line-height:16px;color:#0000d0;font-weight:bold">.</div>
<div class="abs t sim" style="left:553px;top:657px;width:11px;text-align:center;font-size:15px;line-height:16px;color:#0000d0">s</div>
<svg class="abs" style="left:564px;top:660px" width="9" height="6" viewBox="0 0 9 6"><path d="M0.6 0.5H8.6L4.6 5.2z" fill="#000"/></svg>
<div class="abs" style="left:611px;top:625px;width:1px;height:56px;background:#c4c4c8;"></div>
<div class="abs" style="left:613px;top:625px;width:1px;height:56px;background:#c4c4c8;"></div>
<div class="grab" style="left:614px;top:630px;height:47px"></div>
<div class="abs" style="left:624px;top:635px;width:228px;height:33px;background:#b5b9c6;border-top:2px solid #7c7c80;border-left:2px solid #7c7c80;border-bottom:1px solid #e4e4e8;border-right:1px solid #e4e4e8"></div>
<div class="abs" style="left:627.3px;top:637px;width:33.5px;height:30px;background:#cdcfd6;"></div>
<div class="abs" style="left:703px;top:637px;width:34px;height:30px;background:#cdcfd6;"></div>
<div class="abs" style="left:779.2px;top:637px;width:34px;height:30px;background:#cdcfd6;"></div>
<div class="abs" style="left:841.5px;top:637px;width:1px;height:30px;background:#eceef2;"></div>
<div class="abs t sim" style="left:627.3px;top:639px;width:17px;text-align:center;font-size:27px;line-height:28px;color:#0000d0">0</div>
<div class="abs t sim" style="left:644.1px;top:639px;width:17px;text-align:center;font-size:27px;line-height:28px;color:#0000d0">0</div>
<div class="abs t sim" style="left:703px;top:639px;width:17px;text-align:center;font-size:27px;line-height:28px;color:#0000d0">0</div>
<div class="abs t sim" style="left:719.8px;top:639px;width:17px;text-align:center;font-size:27px;line-height:28px;color:#0000d0">0</div>
<div class="abs t sim" style="left:779.2px;top:639px;width:17px;text-align:center;font-size:27px;line-height:28px;color:#0000d0">0</div>
<div class="abs t sim" style="left:796.0px;top:639px;width:17px;text-align:center;font-size:27px;line-height:28px;color:#0000d0">0</div>
<div class="abs t sim" style="left:673.5px;top:639px;width:17px;text-align:center;font-size:27px;line-height:28px;color:#0000d0">h</div>
<div class="abs t sim" style="left:749.5px;top:639px;width:17px;text-align:center;font-size:27px;line-height:28px;color:#0000d0;transform:scaleX(0.68)">m</div>
<div class="abs t sim" style="left:826px;top:639px;width:17px;text-align:center;font-size:27px;line-height:28px;color:#0000d0">s</div>
<svg class="abs" style="left:842px;top:648px" width="9" height="6" viewBox="0 0 9 6"><path d="M0.6 0.5H8.6L4.6 5.2z" fill="#000"/></svg>
<div class="abs" style="left:859px;top:625px;width:1px;height:56px;background:#c4c4c8;"></div>
<div class="abs" style="left:861px;top:625px;width:1px;height:56px;background:#c4c4c8;"></div>
<div class="grab" style="left:865px;top:629px;height:20px"></div>
<div class="abs" style="left:875px;top:625px;width:27px;height:27px;background:#e9effc;border-bottom:1px solid #a8b2cc;border-right:1px solid #a8b2cc"></div>
<svg class="abs" style="left:880px;top:631px" width="16" height="16" viewBox="0 0 16 16"><path d="M1 1L15 8L1 15z" fill="#468c6c"/></svg>
<div class="abs" style="left:908px;top:642px;width:137px;height:2px;background:#b4b4b4;"></div>
<div class="abs" style="left:908px;top:639px;width:1px;height:3px;background:#b4b4b4;"></div>
<div class="abs" style="left:918px;top:639px;width:1px;height:3px;background:#b4b4b4;"></div>
<div class="abs" style="left:927px;top:639px;width:1px;height:3px;background:#b4b4b4;"></div>
<div class="abs" style="left:937px;top:639px;width:1px;height:3px;background:#b4b4b4;"></div>
<div class="abs" style="left:947px;top:639px;width:1px;height:3px;background:#b4b4b4;"></div>
<div class="abs" style="left:956px;top:639px;width:1px;height:3px;background:#b4b4b4;"></div>
<div class="abs" style="left:966px;top:639px;width:1px;height:3px;background:#b4b4b4;"></div>
<div class="abs" style="left:976px;top:639px;width:1px;height:3px;background:#b4b4b4;"></div>
<div class="abs" style="left:986px;top:639px;width:1px;height:3px;background:#b4b4b4;"></div>
<div class="abs" style="left:995px;top:639px;width:1px;height:3px;background:#b4b4b4;"></div>
<div class="abs" style="left:1005px;top:639px;width:1px;height:3px;background:#b4b4b4;"></div>
<div class="abs" style="left:1015px;top:639px;width:1px;height:3px;background:#b4b4b4;"></div>
<div class="abs" style="left:1024px;top:639px;width:1px;height:3px;background:#b4b4b4;"></div>
<div class="abs" style="left:1034px;top:639px;width:1px;height:3px;background:#b4b4b4;"></div>
<div class="abs" style="left:1044px;top:639px;width:1px;height:3px;background:#b4b4b4;"></div>
<div class="abs" style="left:948px;top:633px;width:10px;height:18px;background:#f4f6fc;border:1px solid #555;border-radius:2.5px"></div>
<div class="abs" style="left:952px;top:638px;width:2px;height:7px;background:#777;"></div>
<div class="abs" style="left:908px;top:632px;width:5px;height:1px;background:#000;"></div>
<div class="abs" style="left:1037px;top:632px;width:5px;height:1px;background:#000;"></div>
<div class="abs" style="left:1039px;top:630px;width:1px;height:5px;background:#000;"></div>
<div class="abs" style="left:1051px;top:625px;width:1px;height:27px;background:#c4c4c8;"></div>
<div class="abs" style="left:1054px;top:625px;width:1px;height:27px;background:#c4c4c8;"></div>
<div class="abs" style="left:862px;top:652px;width:304px;height:1px;background:#c4c4c8;"></div>
<div class="abs" style="left:0px;top:682px;width:1166px;height:25px;background:#f0f0f0;"></div>
<div class="abs t " style="left:15px;top:687px;font-size:13px;line-height:16px">Stopped.</div>
<div class="abs" style="left:196px;top:684px;width:1px;height:20px;background:#d4d4d4;"></div>
<div class="abs" style="left:986px;top:684px;width:1px;height:20px;background:#d4d4d4;"></div>
<div class="abs" style="left:10px;top:684px;width:1px;height:20px;background:#dcdcdc;"></div>
<svg class="abs" style="left:1153px;top:696px" width="12" height="12" viewBox="0 0 12 12"><rect x="8" y="0" width="2" height="2" fill="#a0a0a0"/><rect x="5" y="3" width="2" height="2" fill="#a0a0a0"/><rect x="8" y="3" width="2" height="2" fill="#a0a0a0"/><rect x="2" y="6" width="2" height="2" fill="#a0a0a0"/><rect x="5" y="6" width="2" height="2" fill="#a0a0a0"/><rect x="8" y="6" width="2" height="2" fill="#a0a0a0"/></svg>
</div></div>
</body></html>
